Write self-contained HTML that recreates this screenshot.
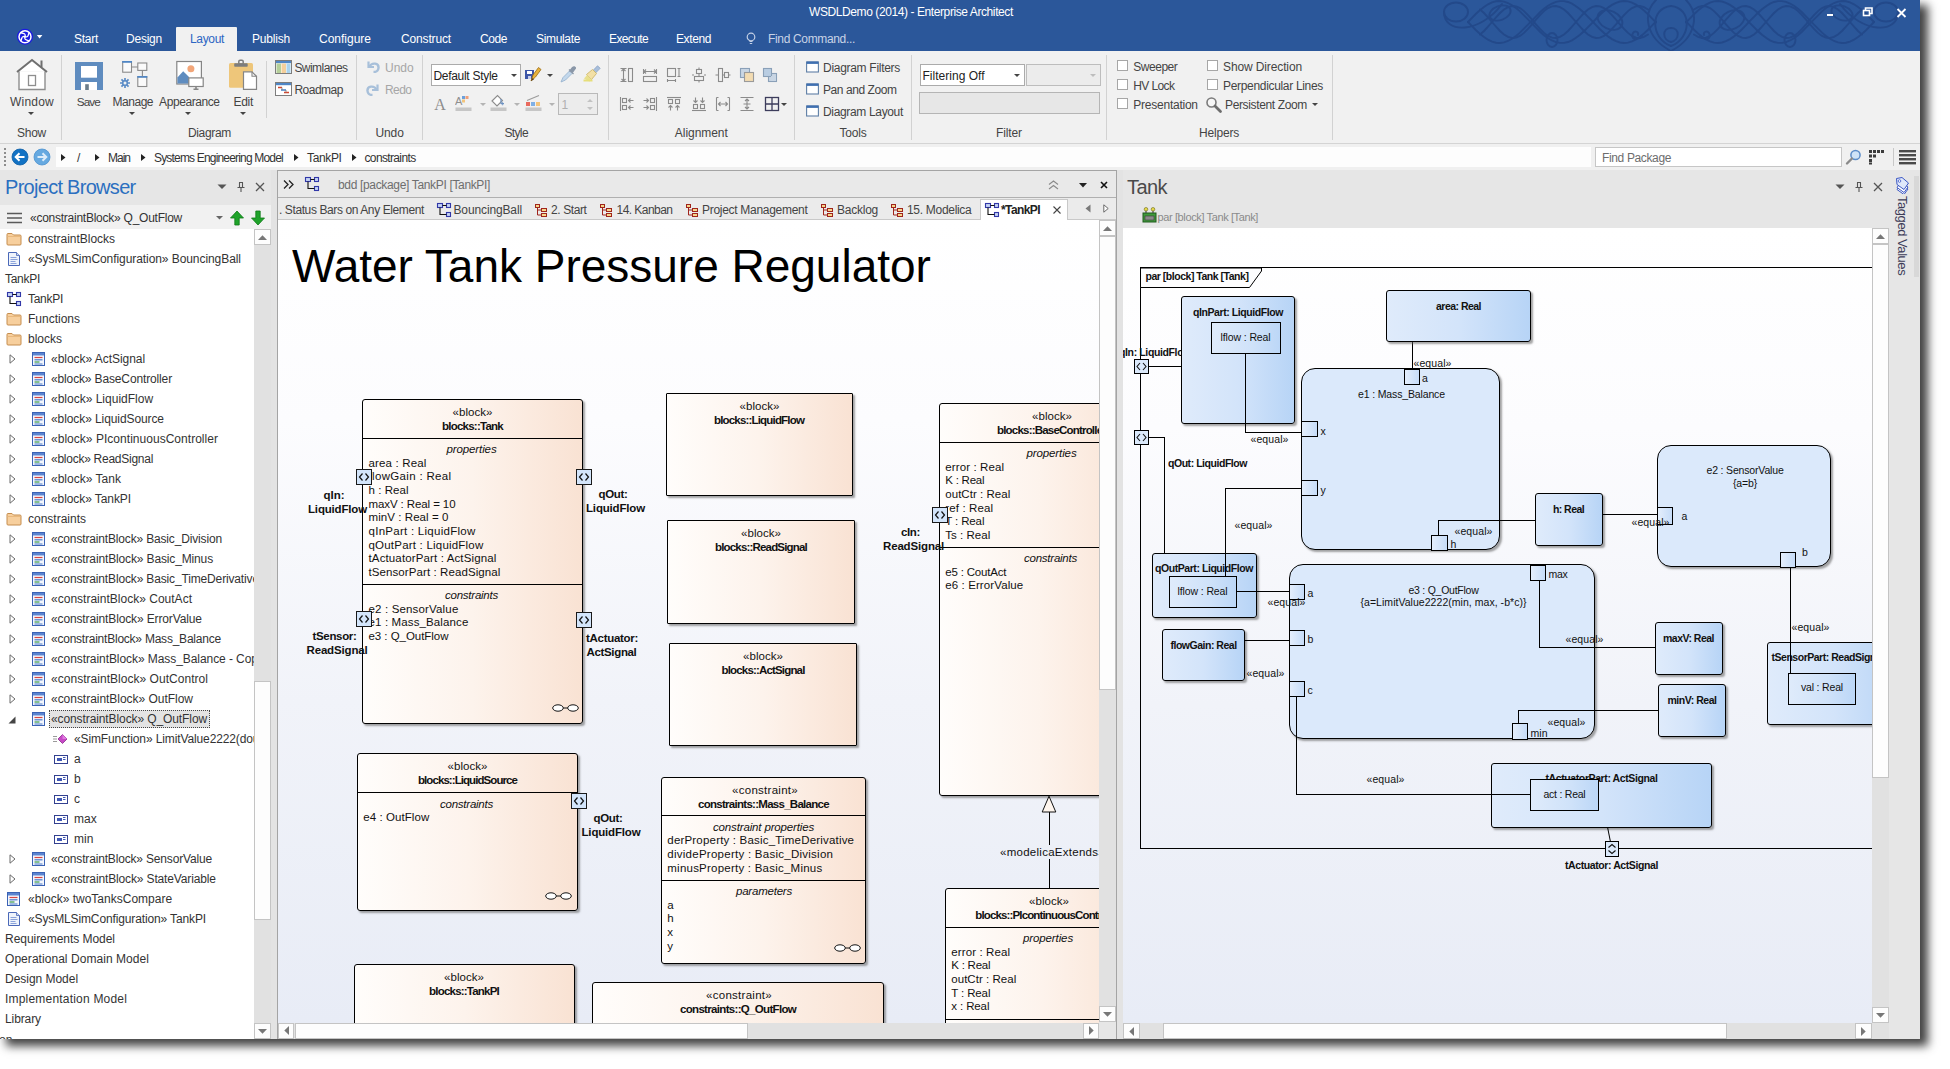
<!DOCTYPE html>
<html lang="en"><head><meta charset="utf-8"><title>WSDLDemo (2014) - Enterprise Architect</title>
<style>
html,body{margin:0;padding:0;background:#fff;}
body{width:1950px;height:1069px;overflow:hidden;position:relative;font-family:"Liberation Sans",sans-serif;font-size:12px;color:#222;}
.b{position:absolute;box-sizing:border-box;display:block;}
.t{position:absolute;white-space:nowrap;display:block;}
#win{position:absolute;left:0;top:0;width:1920px;height:1039px;background:#e6e6e6;overflow:hidden;}
#shadow{position:absolute;left:0;top:0;width:1920px;height:1039px;box-shadow:7px 6px 9px 1px rgba(0,0,0,.74);}
.vp{position:absolute;overflow:hidden;}
.blk{position:absolute;box-sizing:border-box;border:1px solid #000;border-radius:3px;background:linear-gradient(90deg,#fffdfb 0%,#fdf3ec 50%,#f9e2d3 100%);box-shadow:2px 2px 2px rgba(90,90,90,.55);}
.sq{border-radius:1px;}
.bb{position:absolute;box-sizing:border-box;border:1px solid #000;border-radius:3px;background:linear-gradient(90deg,#dfebfb 0%,#d3e4fa 50%,#b7d4f6 100%);box-shadow:2px 2px 2px rgba(90,90,90,.55);}
.bbi{position:absolute;box-sizing:border-box;border:1px solid #000;background:linear-gradient(90deg,#dfebfb 0%,#cfe2f9 60%,#bcd7f7 100%);}
.rb{position:absolute;box-sizing:border-box;border:1px solid #000;border-radius:14px;background:#dbe9fb;box-shadow:2px 2px 2px rgba(90,90,90,.55);}
.pt{position:absolute;box-sizing:border-box;border:1px solid #000;background:linear-gradient(90deg,#e4eefc,#c6dcf8);}
.ln{position:absolute;background:#000;}
.cb{position:absolute;box-sizing:border-box;width:11px;height:11px;border:1px solid #a6a6a6;background:#fff;}
.sep{position:absolute;width:1px;background:#d2d2d2;}
</style></head><body>
<div id="shadow"></div>
<div id="win">

<div class="b " style="left:0px;top:0px;width:1920px;height:51px;background:#2b579a"></div>
<svg class="b" style="left:1420px;top:0px;" width="500" height="51" viewBox="0 0 500 51"><g fill="none" stroke="#23498a" stroke-width="1.900" stroke-linecap="round"><polyline points="48.0 22.0 52.0 26.2 56.0 30.2 60.0 33.9 64.0 37.1 68.0 39.7 72.0 41.6 76.0 42.7 80.0 43.0 84.0 42.4 88.0 41.0 92.0 38.8 96.0 36.0 100.0 32.6 104.0 28.7 108.0 24.6 112.0 20.4 116.0 16.3 120.0 12.3 124.0 8.8 128.0 5.8 132.0 3.5 136.0 1.9 140.0 1.1 144.0 1.1 148.0 2.0 152.0 3.7 156.0 6.2 160.0 9.2 164.0 12.8 168.0 16.8 172.0 20.9 176.0 25.2 180.0 29.2 184.0 33.0 188.0 36.4 192.0 39.1 196.0 41.2 200.0 42.5 204.0 43.0 208.0 42.6 212.0 41.4 216.0 39.4 220.0 36.8 224.0 33.5 228.0 29.7 232.0 25.7 236.0 21.5"/><polyline points="48.0 22.0 52.0 17.8 56.0 13.8 60.0 10.1 64.0 6.9 68.0 4.3 72.0 2.4 76.0 1.3 80.0 1.0 84.0 1.6 88.0 3.0 92.0 5.2 96.0 8.0 100.0 11.4 104.0 15.3 108.0 19.4 112.0 23.6 116.0 27.7 120.0 31.7 124.0 35.2 128.0 38.2 132.0 40.5 136.0 42.1 140.0 42.9 144.0 42.9 148.0 42.0 152.0 40.3 156.0 37.8 160.0 34.8 164.0 31.2 168.0 27.2 172.0 23.1 176.0 18.8 180.0 14.8 184.0 11.0 188.0 7.6 192.0 4.9 196.0 2.8 200.0 1.5 204.0 1.0 208.0 1.4 212.0 2.6 216.0 4.6 220.0 7.2 224.0 10.5 228.0 14.3 232.0 18.3 236.0 22.5"/><polyline points="60.0 34.5 64.0 31.0 68.0 26.7 72.0 22.0 76.0 17.3 80.0 13.0 84.0 9.5 88.0 7.1 92.0 6.0 96.0 6.4 100.0 8.1 104.0 11.1 108.0 15.1 112.0 19.6 116.0 24.4 120.0 28.9 124.0 32.9 128.0 35.9 132.0 37.6 136.0 38.0 140.0 36.9 144.0 34.5 148.0 31.0 152.0 26.7 156.0 22.0 160.0 17.3 164.0 13.0 168.0 9.5 172.0 7.1 176.0 6.0 180.0 6.4 184.0 8.1 188.0 11.1 192.0 15.1 196.0 19.6 200.0 24.4 204.0 28.9 208.0 32.9 212.0 35.9 216.0 37.6 220.0 38.0 224.0 36.9 228.0 34.5"/><polyline points="60.0 9.5 64.0 13.0 68.0 17.3 72.0 22.0 76.0 26.7 80.0 31.0 84.0 34.5 88.0 36.9 92.0 38.0 96.0 37.6 100.0 35.9 104.0 32.9 108.0 28.9 112.0 24.4 116.0 19.6 120.0 15.1 124.0 11.1 128.0 8.1 132.0 6.4 136.0 6.0 140.0 7.1 144.0 9.5 148.0 13.0 152.0 17.3 156.0 22.0 160.0 26.7 164.0 31.0 168.0 34.5 172.0 36.9 176.0 38.0 180.0 37.6 184.0 35.9 188.0 32.9 192.0 28.9 196.0 24.4 200.0 19.6 204.0 15.1 208.0 11.1 212.0 8.1 216.0 6.4 220.0 6.0 224.0 7.1 228.0 9.5"/><ellipse cx="36" cy="12" rx="12" ry="9.500"/><path d="M24 12 C24 34 60 34 82 4"/><ellipse cx="80" cy="13" rx="11" ry="7" transform="rotate(-20 80 13)"/><ellipse cx="132" cy="40" rx="5.500" ry="7"/><ellipse cx="190" cy="20" rx="13" ry="9" transform="rotate(25 190 20)"/><path d="M222 36 c-6 6 -12 2 -9 -3 c2 -3 6 -1 5 2"/><path d="M236 0 C222 14 226 38 251 51"/><path d="M251 6 C230 8 230 38 251 46"/><path d="M251 28 c-9 0 -9 12 0 14"/><g transform="translate(502 0) scale(-1 1)"><polyline points="48.0 22.0 52.0 26.2 56.0 30.2 60.0 33.9 64.0 37.1 68.0 39.7 72.0 41.6 76.0 42.7 80.0 43.0 84.0 42.4 88.0 41.0 92.0 38.8 96.0 36.0 100.0 32.6 104.0 28.7 108.0 24.6 112.0 20.4 116.0 16.3 120.0 12.3 124.0 8.8 128.0 5.8 132.0 3.5 136.0 1.9 140.0 1.1 144.0 1.1 148.0 2.0 152.0 3.7 156.0 6.2 160.0 9.2 164.0 12.8 168.0 16.8 172.0 20.9 176.0 25.2 180.0 29.2 184.0 33.0 188.0 36.4 192.0 39.1 196.0 41.2 200.0 42.5 204.0 43.0 208.0 42.6 212.0 41.4 216.0 39.4 220.0 36.8 224.0 33.5 228.0 29.7 232.0 25.7 236.0 21.5"/><polyline points="48.0 22.0 52.0 17.8 56.0 13.8 60.0 10.1 64.0 6.9 68.0 4.3 72.0 2.4 76.0 1.3 80.0 1.0 84.0 1.6 88.0 3.0 92.0 5.2 96.0 8.0 100.0 11.4 104.0 15.3 108.0 19.4 112.0 23.6 116.0 27.7 120.0 31.7 124.0 35.2 128.0 38.2 132.0 40.5 136.0 42.1 140.0 42.9 144.0 42.9 148.0 42.0 152.0 40.3 156.0 37.8 160.0 34.8 164.0 31.2 168.0 27.2 172.0 23.1 176.0 18.8 180.0 14.8 184.0 11.0 188.0 7.6 192.0 4.9 196.0 2.8 200.0 1.5 204.0 1.0 208.0 1.4 212.0 2.6 216.0 4.6 220.0 7.2 224.0 10.5 228.0 14.3 232.0 18.3 236.0 22.5"/><polyline points="60.0 34.5 64.0 31.0 68.0 26.7 72.0 22.0 76.0 17.3 80.0 13.0 84.0 9.5 88.0 7.1 92.0 6.0 96.0 6.4 100.0 8.1 104.0 11.1 108.0 15.1 112.0 19.6 116.0 24.4 120.0 28.9 124.0 32.9 128.0 35.9 132.0 37.6 136.0 38.0 140.0 36.9 144.0 34.5 148.0 31.0 152.0 26.7 156.0 22.0 160.0 17.3 164.0 13.0 168.0 9.5 172.0 7.1 176.0 6.0 180.0 6.4 184.0 8.1 188.0 11.1 192.0 15.1 196.0 19.6 200.0 24.4 204.0 28.9 208.0 32.9 212.0 35.9 216.0 37.6 220.0 38.0 224.0 36.9 228.0 34.5"/><polyline points="60.0 9.5 64.0 13.0 68.0 17.3 72.0 22.0 76.0 26.7 80.0 31.0 84.0 34.5 88.0 36.9 92.0 38.0 96.0 37.6 100.0 35.9 104.0 32.9 108.0 28.9 112.0 24.4 116.0 19.6 120.0 15.1 124.0 11.1 128.0 8.1 132.0 6.4 136.0 6.0 140.0 7.1 144.0 9.5 148.0 13.0 152.0 17.3 156.0 22.0 160.0 26.7 164.0 31.0 168.0 34.5 172.0 36.9 176.0 38.0 180.0 37.6 184.0 35.9 188.0 32.9 192.0 28.9 196.0 24.4 200.0 19.6 204.0 15.1 208.0 11.1 212.0 8.1 216.0 6.4 220.0 6.0 224.0 7.1 228.0 9.5"/><ellipse cx="36" cy="12" rx="12" ry="9.500"/><path d="M24 12 C24 34 60 34 82 4"/><ellipse cx="80" cy="13" rx="11" ry="7" transform="rotate(-20 80 13)"/><ellipse cx="132" cy="40" rx="5.500" ry="7"/><ellipse cx="190" cy="20" rx="13" ry="9" transform="rotate(25 190 20)"/><path d="M222 36 c-6 6 -12 2 -9 -3 c2 -3 6 -1 5 2"/><path d="M236 0 C222 14 226 38 251 51"/><path d="M251 6 C230 8 230 38 251 46"/><path d="M251 28 c-9 0 -9 12 0 14"/></g></g></svg>
<span class="t " style="left:809px;top:4px;font-size:12px;line-height:16px;letter-spacing:-0.41px;color:#fff">WSDLDemo (2014) - Enterprise Architect</span>
<svg class="b" style="left:1820px;top:4px;" width="90" height="22" viewBox="0 0 90 22"><rect x="7" y="10" width="6" height="2" fill="#fff"/><g fill="none" stroke="#fff" stroke-width="1.6"><rect x="43.5" y="6.500" width="6" height="5"/><path d="M45.500 6 V4 H52 V9.500 H50"/></g><path d="M77.500 5 L85.500 13 M85.500 5 L77.500 13" stroke="#fff" stroke-width="1.8"/></svg>
<svg class="b" style="left:15px;top:27px;" width="34" height="20" viewBox="0 0 34 20"><circle cx="10" cy="9.700" r="8" fill="#1a1ae2"/><circle cx="10" cy="9.700" r="6" fill="none" stroke="#fff" stroke-width="1.500"/><g fill="none" stroke="#fff" stroke-width="1.400"><path d="M5.800 5.500 C9 7 11 6 10 9.700 C9 13.400 11 12.400 14.200 13.900"/><path d="M14.200 5.500 C12.700 8.700 13.700 10.700 10 9.700 C6.300 8.700 7.300 10.700 5.800 13.900"/></g><path d="M21.800 8 h5.600 l-2.800 3.400z" fill="#fff"/></svg>
<div class="b " style="left:176px;top:27px;width:61px;height:25px;background:#f1f1f1;border-radius:1px 1px 0 0"></div>
<span class="t " style="left:74px;top:31px;font-size:12px;line-height:16px;letter-spacing:-0.27px;color:#fff">Start</span>
<span class="t " style="left:126px;top:31px;font-size:12px;line-height:16px;letter-spacing:-0.23px;color:#fff">Design</span>
<span class="t " style="left:190px;top:31px;font-size:12px;line-height:16px;letter-spacing:-0.34px;color:#2c66c3">Layout</span>
<span class="t " style="left:252px;top:31px;font-size:12px;line-height:16px;letter-spacing:-0.19px;color:#fff">Publish</span>
<span class="t " style="left:319px;top:31px;font-size:12px;line-height:16px;letter-spacing:0px;color:#fff">Configure</span>
<span class="t " style="left:401px;top:31px;font-size:12px;line-height:16px;letter-spacing:-0.15px;color:#fff">Construct</span>
<span class="t " style="left:480px;top:31px;font-size:12px;line-height:16px;letter-spacing:-0.42px;color:#fff">Code</span>
<span class="t " style="left:536px;top:31px;font-size:12px;line-height:16px;letter-spacing:-0.34px;color:#fff">Simulate</span>
<span class="t " style="left:609px;top:31px;font-size:12px;line-height:16px;letter-spacing:-0.62px;color:#fff">Execute</span>
<span class="t " style="left:676px;top:31px;font-size:12px;line-height:16px;letter-spacing:-0.39px;color:#fff">Extend</span>
<svg class="b" style="left:744px;top:31px;" width="14" height="16" viewBox="0 0 14 16"><g fill="none" stroke="#c3d0e6" stroke-width="1.2"><circle cx="7" cy="6" r="3.800"/><path d="M5.500 10.500h3M5.800 12.500h2.400"/></g></svg>
<span class="t " style="left:768px;top:31px;font-size:12px;line-height:16px;letter-spacing:-0.34px;color:#c8d3e6">Find Command...</span>
<div class="b " style="left:0px;top:51px;width:1920px;height:93px;background:#f1f1f1"></div>
<div class="b " style="left:0px;top:143px;width:1920px;height:1px;background:#d4d4d4"></div>
<div class="b " style="left:0px;top:144px;width:1920px;height:26px;background:#f0f0f0"></div>
<div class="sep" style="left:61px;top:55px;height:85px"></div>
<div class="sep" style="left:356px;top:55px;height:85px"></div>
<div class="sep" style="left:422px;top:55px;height:85px"></div>
<div class="sep" style="left:608px;top:55px;height:85px"></div>
<div class="sep" style="left:794px;top:55px;height:85px"></div>
<div class="sep" style="left:911px;top:55px;height:85px"></div>
<div class="sep" style="left:1106px;top:55px;height:85px"></div>
<div class="sep" style="left:1332px;top:55px;height:85px"></div>
<div class="sep" style="left:266px;top:61px;height:57px"></div>
<svg class="b" style="left:15px;top:58px;" width="34" height="33" viewBox="0 0 34 33"><g fill="none" stroke-linejoin="miter"><path d="M4 13.500 V31.500 H30 V13.500" stroke="#8e8e8e" stroke-width="1.4" fill="#fff"/><path d="M5 13 L17 2.500 L29 13z" fill="#fff" stroke="none"/><path d="M2 14 L17 2 L32 14" stroke="#6f6f6f" stroke-width="2"/><path d="M26.500 2.500 V9" stroke="#6f6f6f" stroke-width="2"/><rect x="13.500" y="17.500" width="7" height="10" stroke="#8e8e8e" stroke-width="1.3" fill="#fff"/></g></svg>
<span class="t " style="left:10px;top:93.5px;font-size:12px;line-height:16px;letter-spacing:0.22px;color:#444">Window</span>
<svg class="b" style="left:28px;top:111.5px;" width="6" height="3" viewBox="0 0 6 3"><path d="M0 0h6l-3 3z" fill="#444"/></svg>
<span class="t " style="left:17px;top:124.5px;font-size:12px;line-height:16px;letter-spacing:-0.25px;color:#444">Show</span>
<svg class="b" style="left:75px;top:62px;" width="28" height="28" viewBox="0 0 28 28"><rect width="28" height="28" fill="#5f8cbf"/><rect x="6" y="4" width="16" height="11.700" fill="#fff"/><rect x="6" y="20" width="16" height="8" fill="#fff"/><rect x="10.200" y="22.200" width="3.600" height="5.800" fill="#6a7c8a"/></svg>
<span class="t " style="left:76.8px;top:94px;font-size:11.75px;line-height:15px;letter-spacing:-0.95px;color:#444">Save</span>
<svg class="b" style="left:119px;top:60px;" width="30" height="30" viewBox="0 0 30 30"><g fill="#fafafa" stroke="#8a8a8a" stroke-width="1.100"><rect x="3.700" y="1.600" width="8.800" height="10.600"/><rect x="18.800" y="3" width="9" height="7.400"/><rect x="18.800" y="16.700" width="9" height="9.800"/></g><path d="M3.200 1.800h9.800M18.300 16.900h10" stroke="#4f86c6" stroke-width="1.800"/><path d="M12.500 7h6.300M23.400 10.400v6" stroke="#8a8a8a" stroke-width="1.100" fill="none"/><g transform="translate(6 23)"><g stroke="#5b8cc6" stroke-width="1.700"><path d="M0 -5V5M-5 0H5M-3.550 -3.550L3.550 3.550M-3.550 3.550L3.550 -3.550"/></g><circle r="3.100" fill="#5b8cc6"/><circle r="1.500" fill="#f1f1f1"/></g></svg>
<span class="t " style="left:112.55px;top:93.5px;font-size:12px;line-height:16px;letter-spacing:-0.48px;color:#444">Manage</span>
<svg class="b" style="left:129px;top:111.5px;" width="6" height="3" viewBox="0 0 6 3"><path d="M0 0h6l-3 3z" fill="#444"/></svg>
<svg class="b" style="left:174px;top:60px;" width="32" height="32" viewBox="0 0 32 32"><rect x="2.800" y="1.500" width="24.600" height="22.500" fill="#fff" stroke="#858585" stroke-width="1.200"/><circle cx="16.900" cy="8.800" r="3.500" fill="#f2a679"/><path d="M3.400 17.500 L9.200 11.200 L15 17 V23.400 H3.400z" fill="#5f8cbf"/><rect x="14.800" y="17.900" width="14.400" height="8.600" fill="#fff" stroke="#858585" stroke-width="1.200"/><path d="M22 26.500v2.300M19.500 29.300h5" stroke="#858585" stroke-width="1.600" fill="none"/></svg>
<span class="t " style="left:159.05px;top:93.5px;font-size:12px;line-height:16px;letter-spacing:-0.42px;color:#444">Appearance</span>
<svg class="b" style="left:185px;top:111.5px;" width="6" height="3" viewBox="0 0 6 3"><path d="M0 0h6l-3 3z" fill="#444"/></svg>
<svg class="b" style="left:228px;top:59px;" width="30" height="32" viewBox="0 0 30 32"><rect x="1" y="4" width="24" height="24.800" rx="1.600" fill="#eec67a"/><rect x="6.200" y="4.200" width="13.500" height="3.600" rx=".8" fill="#7d7d7d"/><rect x="10.800" y="1.300" width="4.400" height="4" rx="1.300" fill="none" stroke="#7d7d7d" stroke-width="1.500"/><path d="M15.500 12.800 H24 L28.500 17.300 V30.300 H15.500z" fill="#fff" stroke="#858585" stroke-width="1.200"/><path d="M24 12.800V17.300H28.500" fill="none" stroke="#858585" stroke-width="1.100"/></svg>
<span class="t " style="left:233.45px;top:93.5px;font-size:12px;line-height:16px;letter-spacing:-0.29px;color:#444">Edit</span>
<svg class="b" style="left:239.5px;top:111.5px;" width="6" height="3" viewBox="0 0 6 3"><path d="M0 0h6l-3 3z" fill="#444"/></svg>
<svg class="b" style="left:275px;top:60px;" width="17" height="14" viewBox="0 0 17 14"><rect x=".5" y=".5" width="16" height="13" fill="#fff" stroke="#7d7d7d"/><rect x="1" y="1" width="15" height="2.200" fill="#4f86c6"/><rect x="1.500" y="3.500" width="4.500" height="9.500" fill="#b5cf9a"/><rect x="6.500" y="3.500" width="4.500" height="9.500" fill="#f4cf9b"/><rect x="11.500" y="3.500" width="4" height="9.500" fill="#a9d3ee"/></svg>
<span class="t " style="left:294.4px;top:59.5px;font-size:12px;line-height:16px;letter-spacing:-0.54px;color:#444">Swimlanes</span>
<svg class="b" style="left:275px;top:82px;" width="17" height="14" viewBox="0 0 17 14"><rect x=".5" y=".5" width="16" height="13" fill="#fff" stroke="#7d7d7d"/><rect x="1" y="1" width="15" height="2.200" fill="#4f86c6"/><path d="M3 5.500h4M9 10.500h5" stroke="#d0462f" stroke-width="1.600"/><path d="M6 8h5" stroke="#4f86c6" stroke-width="1.600"/><path d="M7 5.500v2.500M11 8v2.500" stroke="#7d7d7d" stroke-width=".8"/></svg>
<span class="t " style="left:294.4px;top:81.5px;font-size:12px;line-height:16px;letter-spacing:-0.49px;color:#444">Roadmap</span>
<span class="t " style="left:188px;top:124.5px;font-size:12px;line-height:16px;letter-spacing:-0.36px;color:#444">Diagram</span>
<svg class="b" style="left:366px;top:60px;" width="15" height="13" viewBox="0 0 15 13"><path d="M2.500 1.500v5.500h5.500" fill="none" stroke="#a8c0da" stroke-width="2.200"/><path d="M3.500 6.500 C6 2 13 3 12.500 8 C12.200 10.800 10 12 7.500 12" fill="none" stroke="#a8c0da" stroke-width="2.400"/></svg>
<span class="t " style="left:385px;top:59.5px;font-size:12px;line-height:16px;letter-spacing:-0.02px;color:#a6a6a6">Undo</span>
<svg class="b" style="left:365px;top:83px;" width="15" height="13" viewBox="0 0 15 13"><path d="M12.500 1.500v5.500h-5.500" fill="none" stroke="#a8c0da" stroke-width="2.200"/><path d="M11.500 6.500 C9 2 2 3 2.500 8 C2.800 10.800 5 12 7.500 12" fill="none" stroke="#a8c0da" stroke-width="2.400"/></svg>
<span class="t " style="left:385px;top:81.5px;font-size:12px;line-height:16px;letter-spacing:-0.55px;color:#a6a6a6">Redo</span>
<span class="t " style="left:375.4px;top:124.5px;font-size:12px;line-height:16px;letter-spacing:-0.07px;color:#444">Undo</span>
<div class="b " style="left:431px;top:64px;width:90px;height:22px;background:#fff;border:1px solid #ababab"></div>
<span class="t " style="left:433.4px;top:67.5px;font-size:12px;line-height:16px;letter-spacing:-0.29px;color:#222">Default Style</span>
<svg class="b" style="left:510.5px;top:73.5px;" width="6" height="3" viewBox="0 0 6 3"><path d="M0 0h6l-3 3z" fill="#444"/></svg>
<svg class="b" style="left:524px;top:66px;" width="18" height="18" viewBox="0 0 18 18"><rect x="1" y="4" width="9" height="9" fill="#3d56a8"/><rect x="3" y="5" width="5" height="3" fill="#fff"/><rect x="4" y="10" width="3" height="3" fill="#c8d0ea"/><path d="M7 15 L9 9 L14.500 1.500 L17 3.500 L11.500 11z" fill="#e8b33c" stroke="#9a6a10" stroke-width=".8"/><path d="M7 15l1 -3 2 1.500z" fill="#5a4020"/></svg>
<svg class="b" style="left:547px;top:73.5px;" width="6" height="3" viewBox="0 0 6 3"><path d="M0 0h6l-3 3z" fill="#444"/></svg>
<svg class="b" style="left:559px;top:66px;" width="17" height="18" viewBox="0 0 17 18"><path d="M2 16 L4 11.500 L10.500 5 L13 7.500 L6.500 14z" fill="#c3d8ec" stroke="#9ab4cf" stroke-width=".9"/><path d="M10 3.500 L14.500 8 M11 5 L13.500 1.500 Q15.500 0 16.500 2 L14 5.500z" fill="#8a97a8" stroke="#8a97a8" stroke-width="1.300"/></svg>
<svg class="b" style="left:583px;top:65px;" width="18" height="18" viewBox="0 0 18 18"><path d="M10 5.500 L14.500 0.800 L17.200 3.300 L12.500 8z" fill="#a9bfdc" stroke="#8aa3c4" stroke-width=".8"/><path d="M3.500 9.500 L9.500 4.500 L13.500 8.500 L8.500 14.500z" fill="#f3e0a6" stroke="#cdb76a" stroke-width=".9"/><path d="M1 13.500 L4 10 L8 14 L6.500 16.500z" fill="#e9e08d"/><path d="M0.500 15.500 h9" stroke="#e6de7a" stroke-width="2"/></svg>
<span class="t " style="left:434.16px;top:93.5px;font-size:16px;line-height:21px;color:#8c8c8c;font-family:&quot;Liberation Serif&quot;,serif">A</span>
<svg class="b" style="left:455px;top:95px;" width="18" height="17" viewBox="0 0 18 17"><text x="0" y="10" font-family="Liberation Sans,sans-serif" font-size="11" fill="#8f8f8f">A</text><rect x="7" y="1" width="3" height="3" fill="#6aa0dc"/><rect x="10.500" y="1" width="3" height="3" fill="#f0a07a"/><rect x="7" y="4.500" width="3" height="3" fill="#f3c47c"/><rect x="0.500" y="12.500" width="16" height="3.500" fill="#c6c6c6"/></svg>
<svg class="b" style="left:479.5px;top:102.5px;" width="6" height="3" viewBox="0 0 6 3"><path d="M0 0h6l-3 3z" fill="#b4b4b4"/></svg>
<svg class="b" style="left:490px;top:94px;" width="18" height="18" viewBox="0 0 18 18"><path d="M2 7 L7.500 1.500 L12.500 6.500 L7 12z" fill="#fff" stroke="#8c8c8c" stroke-width="1.100"/><path d="M12.500 7.500 q2 3 0 4 q-2 -1 0 -4z" fill="#8aa8cf"/><path d="M11 5 v4.500 h3" stroke="#6f93c2" stroke-width="1.200" fill="none"/><rect x="0.500" y="13.500" width="16" height="3.500" fill="#c6c6c6"/></svg>
<svg class="b" style="left:514.3px;top:102.5px;" width="6" height="3" viewBox="0 0 6 3"><path d="M0 0h6l-3 3z" fill="#b4b4b4"/></svg>
<svg class="b" style="left:525px;top:94px;" width="18" height="18" viewBox="0 0 18 18"><path d="M2 6.500 L14 1.500" stroke="#9c9c9c" stroke-width="1.100"/><rect x="1" y="8" width="4" height="4" fill="#e96a5e"/><rect x="6" y="8" width="4" height="4" fill="#7fb0e6"/><rect x="11" y="8" width="4" height="4" fill="#f3c47c"/><rect x="0.500" y="13.500" width="16" height="3.500" fill="#c6c6c6"/></svg>
<svg class="b" style="left:549.3px;top:102.5px;" width="6" height="3" viewBox="0 0 6 3"><path d="M0 0h6l-3 3z" fill="#b4b4b4"/></svg>
<div class="b " style="left:558px;top:93px;width:40px;height:22px;background:#ececec;border:1px solid #b9b9b9"></div>
<span class="t " style="left:561.5px;top:96.5px;font-size:12px;line-height:16px;color:#b0b0b0">1</span>
<svg class="b" style="left:586px;top:98px;" width="8" height="13" viewBox="0 0 8 13"><path d="M1 4L4 1l3 3zM1 9l3 3 3-3z" fill="#c2c2c2"/></svg>
<span class="t " style="left:504.45px;top:124.5px;font-size:12px;line-height:16px;letter-spacing:-0.64px;color:#444">Style</span>
<svg class="b" style="left:619px;top:67px;" width="16" height="16" viewBox="0 0 16 16"><g fill="none" stroke="#8b8b8b" stroke-width="1.100"><path d="M1.500 1.500h6M1.500 14.500h6M4.500 2v12M2.500 4l2-2 2 2M2.500 12l2 2 2-2" stroke-dasharray="0"/><rect x="9.500" y="1.500" width="4" height="13"/></g></svg>
<svg class="b" style="left:641.7px;top:67px;" width="16" height="16" viewBox="0 0 16 16"><g fill="none" stroke="#8b8b8b" stroke-width="1.100"><rect x="1.500" y="9.500" width="13" height="5"/><path d="M1.500 2v5M14.500 2v5M2 4.500h12M4 2.500l-2 2 2 2M12 2.500l2 2-2 2"/></g></svg>
<svg class="b" style="left:666.3px;top:67px;" width="16" height="16" viewBox="0 0 16 16"><g fill="none" stroke="#8b8b8b" stroke-width="1.100"><rect x="1.500" y="1.500" width="8" height="8"/><path d="M13 1.500v8M11.500 1.500h3M11.500 9.500h3M1.500 13.500h8M1.500 12v3M9.500 12v3"/></g></svg>
<svg class="b" style="left:690.7px;top:67px;" width="16" height="16" viewBox="0 0 16 16"><g fill="none" stroke="#8b8b8b" stroke-width="1.100"><rect x="5.500" y="2.500" width="5" height="4"/><rect x="3.500" y="9.500" width="9" height="4"/><path d="M8 0.500v2M8 6.500v3M8 13.500v2M1 8h2M13 8h2"/></g></svg>
<svg class="b" style="left:714.6px;top:67px;" width="16" height="16" viewBox="0 0 16 16"><g fill="none" stroke="#8b8b8b" stroke-width="1.100"><rect x="3.500" y="1.500" width="4" height="13"/><rect x="9.500" y="5.500" width="4" height="5"/><path d="M0.500 8h3M7.500 8h2M13.500 8h2"/></g></svg>
<svg class="b" style="left:738.5px;top:67px;" width="16" height="16" viewBox="0 0 16 16"><g fill="none" stroke="#8b8b8b" stroke-width="1.100"><rect x="1.500" y="1.500" width="9" height="9" fill="#c9d6e4" stroke="#8aa0b8"/><rect x="5.500" y="5.500" width="9" height="9" fill="#f3dcb2" stroke="#9a9a9a"/></g></svg>
<svg class="b" style="left:762.4px;top:67px;" width="16" height="16" viewBox="0 0 16 16"><g fill="none" stroke="#8b8b8b" stroke-width="1.100"><rect x="6.500" y="6.500" width="8" height="8" fill="#c9d6e4" stroke="#8aa0b8"/><rect x="1.500" y="1.500" width="8" height="8" fill="#b9cde2" stroke="#8aa0b8"/><rect x="9" y="9" width="5" height="5" fill="#c9d6e4" stroke="none"/></g></svg>
<svg class="b" style="left:619px;top:96px;" width="16" height="16" viewBox="0 0 16 16"><g fill="none" stroke="#8b8b8b" stroke-width="1.100"><path d="M1.500 1v14"/><rect x="3.500" y="2.500" width="4" height="4"/><rect x="3.500" y="9.500" width="4" height="4"/><path d="M14.500 4.500h-5M11.500 2.500l-2 2 2 2M14.500 11.500h-5M11.500 9.500l-2 2 2 2"/></g></svg>
<svg class="b" style="left:641.7px;top:96px;" width="16" height="16" viewBox="0 0 16 16"><g fill="none" stroke="#8b8b8b" stroke-width="1.100"><path d="M14.500 1v14"/><rect x="8.500" y="2.500" width="4" height="4"/><rect x="8.500" y="9.500" width="4" height="4"/><path d="M1.500 4.500h5M4.500 2.500l2 2-2 2M1.500 11.500h5M4.500 9.500l2 2-2 2"/></g></svg>
<svg class="b" style="left:666.3px;top:96px;" width="16" height="16" viewBox="0 0 16 16"><g fill="none" stroke="#8b8b8b" stroke-width="1.100"><path d="M1 1.500h14"/><rect x="2.500" y="3.500" width="4" height="4"/><rect x="9.500" y="3.500" width="4" height="4"/><path d="M4.500 14.500v-5M2.500 11.500l2-2 2 2M11.500 14.500v-5M9.500 11.500l2-2 2 2"/></g></svg>
<svg class="b" style="left:690.7px;top:96px;" width="16" height="16" viewBox="0 0 16 16"><g fill="none" stroke="#8b8b8b" stroke-width="1.100"><path d="M1 14.500h14"/><rect x="2.500" y="8.500" width="4" height="4"/><rect x="9.500" y="8.500" width="4" height="4"/><path d="M4.500 1.500v5M2.500 4.500l2 2 2-2M11.500 1.500v5M9.500 4.500l2 2 2-2"/></g></svg>
<svg class="b" style="left:714.6px;top:96px;" width="16" height="16" viewBox="0 0 16 16"><g fill="none" stroke="#8b8b8b" stroke-width="1.100"><path d="M1.500 1.500v13M3.500 1.500h-2M3.500 14.500h-2M14.500 1.500v13M12.500 1.500h2M12.500 14.500h2M3.500 8h9M5.500 6l-2 2 2 2M10.500 6l2 2-2 2"/></g></svg>
<svg class="b" style="left:738.5px;top:96px;" width="16" height="16" viewBox="0 0 16 16"><g fill="none" stroke="#8b8b8b" stroke-width="1.100"><path d="M1.500 1.500h13M1.500 14.500h13M8 3v10M6 5l2-2 2 2M6 11l2 2 2-2M4.500 8h7"/></g></svg>
<svg class="b" style="left:764px;top:96px;" width="16" height="16" viewBox="0 0 16 16"><g fill="none" stroke="#3d3d5c" stroke-width="1.300"><rect x="1.500" y="1.500" width="13" height="13"/><path d="M8 1.500v13M1.500 8h13"/></g></svg>
<svg class="b" style="left:780.5px;top:102.5px;" width="6" height="3" viewBox="0 0 6 3"><path d="M0 0h6l-3 3z" fill="#444"/></svg>
<span class="t " style="left:674.8px;top:124.5px;font-size:12px;line-height:16px;letter-spacing:-0.04px;color:#444">Alignment</span>
<svg class="b" style="left:806px;top:61px;" width="13" height="12" viewBox="0 0 13 12"><rect x="0.600" y="1" width="11.800" height="10" fill="#fff" stroke="#5f7fa6" stroke-width="1.100"/><rect x="0.600" y="0.500" width="11.800" height="2.400" fill="#3f6fb0"/></svg>
<span class="t " style="left:823px;top:59.5px;font-size:12px;line-height:16px;letter-spacing:-0.29px;color:#444">Diagram Filters</span>
<svg class="b" style="left:806px;top:83px;" width="13" height="12" viewBox="0 0 13 12"><rect x="0.600" y="1" width="11.800" height="10" fill="#fff" stroke="#5f7fa6" stroke-width="1.100"/><rect x="0.600" y="0.500" width="11.800" height="2.400" fill="#3f6fb0"/></svg>
<span class="t " style="left:823px;top:81.5px;font-size:12px;line-height:16px;letter-spacing:-0.43px;color:#444">Pan and Zoom</span>
<svg class="b" style="left:806px;top:105px;" width="13" height="12" viewBox="0 0 13 12"><rect x="0.600" y="1" width="11.800" height="10" fill="#fff" stroke="#5f7fa6" stroke-width="1.100"/><rect x="0.600" y="0.500" width="11.800" height="2.400" fill="#3f6fb0"/></svg>
<span class="t " style="left:823px;top:103.5px;font-size:12px;line-height:16px;letter-spacing:-0.34px;color:#444">Diagram Layout</span>
<span class="t " style="left:839.5px;top:124.5px;font-size:12px;line-height:16px;letter-spacing:-0.2px;color:#444">Tools</span>
<div class="b " style="left:920px;top:64px;width:105px;height:22px;background:#fff;border:1px solid #ababab"></div>
<span class="t " style="left:922.5px;top:67.5px;font-size:12px;line-height:16px;letter-spacing:0.02px;color:#222">Filtering Off</span>
<svg class="b" style="left:1014px;top:73.5px;" width="6" height="3" viewBox="0 0 6 3"><path d="M0 0h6l-3 3z" fill="#444"/></svg>
<div class="b " style="left:1026px;top:64px;width:75px;height:22px;background:#ececec;border:1px solid #bdbdbd"></div>
<svg class="b" style="left:1090px;top:73.5px;" width="6" height="3" viewBox="0 0 6 3"><path d="M0 0h6l-3 3z" fill="#bdbdbd"/></svg>
<div class="b " style="left:919px;top:92px;width:181px;height:22px;background:#e7e7e7;border:1px solid #b5b5b5"></div>
<span class="t " style="left:996px;top:124.5px;font-size:12px;line-height:16px;letter-spacing:-0.11px;color:#444">Filter</span>
<div class="cb" style="left:1117px;top:60px"></div>
<span class="t " style="left:1133.3px;top:58.5px;font-size:12px;line-height:16px;letter-spacing:-0.48px;color:#444">Sweeper</span>
<div class="cb" style="left:1117px;top:79px"></div>
<span class="t " style="left:1133.3px;top:77.5px;font-size:12px;line-height:16px;letter-spacing:-0.62px;color:#444">HV Lock</span>
<div class="cb" style="left:1117px;top:98.3px"></div>
<span class="t " style="left:1133.3px;top:96.8px;font-size:12px;line-height:16px;letter-spacing:-0.24px;color:#444">Presentation</span>
<div class="cb" style="left:1207px;top:60px"></div>
<span class="t " style="left:1223px;top:58.5px;font-size:12px;line-height:16px;letter-spacing:-0.12px;color:#444">Show Direction</span>
<div class="cb" style="left:1207px;top:79px"></div>
<span class="t " style="left:1223px;top:77.5px;font-size:12px;line-height:16px;letter-spacing:-0.32px;color:#444">Perpendicular Lines</span>
<svg class="b" style="left:1205px;top:96px;" width="18" height="18" viewBox="0 0 18 18"><circle cx="6.500" cy="6.500" r="4.500" fill="#f6f6f6" stroke="#7a7a7a" stroke-width="1.600"/><path d="M10 10 L15.500 15.500" stroke="#6d6d6d" stroke-width="2.800" stroke-linecap="round"/></svg>
<span class="t " style="left:1225px;top:97.2px;font-size:12px;line-height:16px;letter-spacing:-0.36px;color:#444">Persistent Zoom</span>
<svg class="b" style="left:1311.5px;top:102.5px;" width="6" height="3" viewBox="0 0 6 3"><path d="M0 0h6l-3 3z" fill="#444"/></svg>
<span class="t " style="left:1199px;top:124.5px;font-size:12px;line-height:16px;letter-spacing:-0.19px;color:#444">Helpers</span>
<svg class="b" style="left:3px;top:147px;" width="5" height="20" viewBox="0 0 5 20"><g fill="#8d8d8d"><rect x="1" y="1" width="2" height="2"/><rect x="1" y="5" width="2" height="2"/><rect x="1" y="9" width="2" height="2"/><rect x="1" y="13" width="2" height="2"/><rect x="1" y="17" width="2" height="2"/></g></svg>
<svg class="b" style="left:11px;top:148px;" width="18" height="18" viewBox="0 0 18 18"><circle cx="9" cy="9" r="8" fill="#1272c4"/><circle cx="9" cy="9" r="8" fill="none" stroke="#0d5ea6" stroke-width=".8"/><path d="M13.500 9H5M8.500 5.200L4.700 9l3.800 3.800" fill="none" stroke="#fff" stroke-width="2"/></svg>
<svg class="b" style="left:33px;top:148px;" width="18" height="18" viewBox="0 0 18 18"><circle cx="9" cy="9" r="8" fill="#66a9e0"/><circle cx="9" cy="9" r="8" fill="none" stroke="#4d92cf" stroke-width=".8"/><path d="M4.500 9H13M9.500 5.200L13.300 9l-3.800 3.800" fill="none" stroke="#dcecf9" stroke-width="2"/></svg>
<div class="b " style="left:56px;top:147px;width:1535px;height:20px;background:#fdfdfd"></div>
<svg class="b" style="left:61px;top:153.5px;" width="5" height="7" viewBox="0 0 5 7"><path d="M0 0l4.500 3.500L0 7z" fill="#222"/></svg>
<span class="t " style="left:77px;top:149.5px;font-size:12px;line-height:16px;color:#333">/</span>
<svg class="b" style="left:95px;top:153.5px;" width="5" height="7" viewBox="0 0 5 7"><path d="M0 0l4.500 3.500L0 7z" fill="#222"/></svg>
<span class="t " style="left:108px;top:149.5px;font-size:12px;line-height:16px;letter-spacing:-1px;color:#333">Main</span>
<svg class="b" style="left:141px;top:153.5px;" width="5" height="7" viewBox="0 0 5 7"><path d="M0 0l4.500 3.500L0 7z" fill="#222"/></svg>
<span class="t " style="left:154px;top:149.5px;font-size:12px;line-height:16px;letter-spacing:-0.82px;color:#333">Systems Engineering Model</span>
<svg class="b" style="left:294px;top:153.5px;" width="5" height="7" viewBox="0 0 5 7"><path d="M0 0l4.500 3.500L0 7z" fill="#222"/></svg>
<span class="t " style="left:307px;top:149.5px;font-size:12px;line-height:16px;letter-spacing:-0.36px;color:#333">TankPI</span>
<svg class="b" style="left:352px;top:153.5px;" width="5" height="7" viewBox="0 0 5 7"><path d="M0 0l4.500 3.500L0 7z" fill="#222"/></svg>
<span class="t " style="left:364.5px;top:149.5px;font-size:12px;line-height:16px;letter-spacing:-0.64px;color:#333">constraints</span>
<div class="b " style="left:1595px;top:147px;width:247px;height:20px;background:#fff;border:1px solid #c6c6c6"></div>
<span class="t " style="left:1602px;top:149.5px;font-size:12px;line-height:16px;letter-spacing:-0.36px;color:#6d6d6d">Find Package</span>
<svg class="b" style="left:1845px;top:148px;" width="18" height="18" viewBox="0 0 18 18"><circle cx="10.500" cy="7" r="4.600" fill="#cfe3f7" stroke="#5b8cc8" stroke-width="1.500"/><path d="M7 10.500L2 15.500" stroke="#8a8a8a" stroke-width="2.400" stroke-linecap="round"/></svg>
<svg class="b" style="left:1868px;top:149px;" width="18" height="16" viewBox="0 0 18 16"><g fill="#3c3c3c"><rect x="1" y="1" width="3" height="3"/><rect x="5" y="1" width="3" height="3"/><rect x="9" y="1" width="3" height="3"/><rect x="13" y="1" width="3" height="3"/><rect x="1" y="5.500" width="3" height="3"/><rect x="5" y="5.500" width="3" height="3"/><rect x="1" y="10" width="3" height="3"/><rect x="1" y="13.500" width="3" height="2"/></g></svg>
<div class="b " style="left:1893px;top:148px;width:1px;height:18px;background:#c8c8c8"></div>
<svg class="b" style="left:1899px;top:150px;" width="17" height="15" viewBox="0 0 17 15"><g fill="#4a4a4a"><rect x="0" y="0" width="17" height="2.400"/><rect x="0" y="4" width="17" height="2.400"/><rect x="0" y="8" width="17" height="2.400"/><rect x="0" y="12" width="17" height="2.400"/></g></svg>
<svg width="0" height="0" style="position:absolute"><defs>
<symbol id="i-folder" viewBox="0 0 16 14"><path d="M1 2.500 Q1 1.500 2 1.500 H6 L7.500 3 H14 Q15 3 15 4 V12 Q15 13 14 13 H2 Q1 13 1 12z" fill="#f7cf9d" stroke="#c58d4e" stroke-width="1"/><path d="M1.500 4.500H14.500" stroke="#e9b97e" stroke-width="1"/></symbol>
<symbol id="i-doc" viewBox="0 0 14 14"><path d="M1.500 0.500 H9.500 L12.500 3.500 V13.500 H1.500z" fill="#eef3fb" stroke="#4a68b8" stroke-width="1"/><path d="M9.500 .5V3.500H12.500" fill="#c9d6f0" stroke="#4a68b8" stroke-width=".8"/><path d="M3.500 5.500h6M3.500 7.500h7M3.500 9.500h5M3.500 11.500h6" stroke="#7e98d6" stroke-width=".9"/></symbol>
<symbol id="i-dgm" viewBox="0 0 16 16"><g fill="#c4d2f4" stroke="#3238a8" stroke-width="1.100"><rect x="1.500" y="1.500" width="5" height="4"/><rect x="10.500" y="1.500" width="4" height="4"/><rect x="10.500" y="10.500" width="4" height="4"/></g><path d="M6.500 3.500h4M4 5.500v7h6.500" fill="none" stroke="#111" stroke-width="1.100"/></symbol>
<symbol id="i-blk" viewBox="0 0 13 14"><rect x="0.500" y="0.500" width="12" height="13" fill="#f4f7fd" stroke="#3b62b5" stroke-width="1"/><rect x="1" y="1" width="11" height="2.500" fill="#5b84d0"/><path d="M2.500 5.500h8" stroke="#d64545" stroke-width="1.200"/><path d="M2.500 7.800h8" stroke="#4a78c8" stroke-width="1.200"/><path d="M2.500 10h5" stroke="#3a9a4a" stroke-width="1.200"/><path d="M2.500 12h8" stroke="#4a78c8" stroke-width="1"/></symbol>
<symbol id="i-port" viewBox="0 0 14 9"><rect x="0.500" y="0.500" width="13" height="8" fill="#fff" stroke="#33408f" stroke-width="1"/><rect x="3" y="3" width="5" height="3" fill="#3f57b5"/><path d="M9 2.500h2.500M9 4.500h2.500" stroke="#3f57b5" stroke-width="1"/></symbol>
<symbol id="i-fn" viewBox="0 0 15 10"><path d="M0 2.500h4M0 5h4M0 7.500h4" stroke="#9a9a9a" stroke-width="1"/><path d="M9.500 0.500 L14 5 L9.500 9.500 L5 5z" fill="#c648c6" stroke="#8a2a8a" stroke-width=".8"/><path d="M9.500 .5L14 5 9.500 5z" fill="#e07ae0"/></symbol>
</defs></svg>
<span class="t " style="left:5px;top:174px;font-size:20px;line-height:26px;letter-spacing:-0.71px;color:#2b6fc0">Project Browser</span>
<svg class="b" style="left:217px;top:184px;" width="10" height="6" viewBox="0 0 10 6"><path d="M0.500 0.500h9l-4.500 4.500z" fill="#555"/></svg>
<svg class="b" style="left:236px;top:181px;" width="10" height="12" viewBox="0 0 10 12"><path d="M3 1.500h4M3.500 1.500v5M6.500 1.500v5M1.500 6.500h7M5 6.500v4.500" fill="none" stroke="#555" stroke-width="1.100"/></svg>
<svg class="b" style="left:255px;top:182px;" width="10" height="10" viewBox="0 0 10 10"><path d="M1 1l8 8M9 1l-8 8" stroke="#555" stroke-width="1.300"/></svg>
<div class="b " style="left:0px;top:205px;width:271px;height:24px;background:#f1f1f1"></div>
<svg class="b" style="left:7px;top:212px;" width="15" height="12" viewBox="0 0 15 12"><path d="M0 1.500h15M0 6h15M0 10.500h15" stroke="#5a5a5a" stroke-width="1.600"/></svg>
<span class="t " style="left:30px;top:209.5px;font-size:12px;line-height:16px;letter-spacing:-0.25px;color:#333">«constraintBlock» Q_OutFlow</span>
<svg class="b" style="left:216px;top:215.5px;" width="7" height="4" viewBox="0 0 7 4"><path d="M0 0h7l-3.500 3.500z" fill="#666"/></svg>
<svg class="b" style="left:229px;top:210px;" width="16" height="16" viewBox="0 0 16 16"><path d="M8 1 L14.500 8 H10.200 V15 H5.800 V8 H1.500z" fill="#1fa32a" stroke="#0f7a18" stroke-width=".8"/></svg>
<svg class="b" style="left:250px;top:210px;" width="16" height="16" viewBox="0 0 16 16"><path d="M8 15 L14.500 8 H10.200 V1 H5.800 V8 H1.500z" fill="#1fa32a" stroke="#0f7a18" stroke-width=".8"/></svg>
<div class="vp" style="left:0;top:229px;width:254px;height:810px;background:#fff">
<svg class="b" style="left:6px;top:3px" width="16" height="14"><use href="#i-folder"/></svg>
<span class="t " style="left:28px;top:2px;font-size:12px;line-height:16px;letter-spacing:-0.02px;color:#333">constraintBlocks</span>
<svg class="b" style="left:7px;top:23px" width="14" height="14"><use href="#i-doc"/></svg>
<span class="t " style="left:28px;top:22px;font-size:12px;line-height:16px;letter-spacing:-0.07px;color:#333">«SysMLSimConfiguration» BouncingBall</span>
<span class="t " style="left:5px;top:42px;font-size:12px;line-height:16px;letter-spacing:-0.28px;color:#333">TankPI</span>
<svg class="b" style="left:6px;top:62px" width="16" height="16"><use href="#i-dgm"/></svg>
<span class="t " style="left:28px;top:62px;font-size:12px;line-height:16px;letter-spacing:-0.28px;color:#333">TankPI</span>
<svg class="b" style="left:6px;top:83px" width="16" height="14"><use href="#i-folder"/></svg>
<span class="t " style="left:28px;top:82px;font-size:12px;line-height:16px;letter-spacing:0px;color:#333">Functions</span>
<svg class="b" style="left:6px;top:103px" width="16" height="14"><use href="#i-folder"/></svg>
<span class="t " style="left:28px;top:102px;font-size:12px;line-height:16px;letter-spacing:0px;color:#333">blocks</span>
<svg class="b" style="left:9px;top:125px;" width="7" height="10" viewBox="0 0 7 10"><path d="M1 0.800 L6 5 L1 9.200z" fill="#fff" stroke="#6a6a6a" stroke-width="1"/></svg>
<svg class="b" style="left:32px;top:123px" width="13" height="14"><use href="#i-blk"/></svg>
<span class="t " style="left:51px;top:122px;font-size:12px;line-height:16px;letter-spacing:-0.04px;color:#333">«block» ActSignal</span>
<svg class="b" style="left:9px;top:145px;" width="7" height="10" viewBox="0 0 7 10"><path d="M1 0.800 L6 5 L1 9.200z" fill="#fff" stroke="#6a6a6a" stroke-width="1"/></svg>
<svg class="b" style="left:32px;top:143px" width="13" height="14"><use href="#i-blk"/></svg>
<span class="t " style="left:51px;top:142px;font-size:12px;line-height:16px;letter-spacing:-0.14px;color:#333">«block» BaseController</span>
<svg class="b" style="left:9px;top:165px;" width="7" height="10" viewBox="0 0 7 10"><path d="M1 0.800 L6 5 L1 9.200z" fill="#fff" stroke="#6a6a6a" stroke-width="1"/></svg>
<svg class="b" style="left:32px;top:163px" width="13" height="14"><use href="#i-blk"/></svg>
<span class="t " style="left:51px;top:162px;font-size:12px;line-height:16px;letter-spacing:0px;color:#333">«block» LiquidFlow</span>
<svg class="b" style="left:9px;top:185px;" width="7" height="10" viewBox="0 0 7 10"><path d="M1 0.800 L6 5 L1 9.200z" fill="#fff" stroke="#6a6a6a" stroke-width="1"/></svg>
<svg class="b" style="left:32px;top:183px" width="13" height="14"><use href="#i-blk"/></svg>
<span class="t " style="left:51px;top:182px;font-size:12px;line-height:16px;letter-spacing:-0.09px;color:#333">«block» LiquidSource</span>
<svg class="b" style="left:9px;top:205px;" width="7" height="10" viewBox="0 0 7 10"><path d="M1 0.800 L6 5 L1 9.200z" fill="#fff" stroke="#6a6a6a" stroke-width="1"/></svg>
<svg class="b" style="left:32px;top:203px" width="13" height="14"><use href="#i-blk"/></svg>
<span class="t " style="left:51px;top:202px;font-size:12px;line-height:16px;letter-spacing:0.03px;color:#333">«block» PIcontinuousController</span>
<svg class="b" style="left:9px;top:225px;" width="7" height="10" viewBox="0 0 7 10"><path d="M1 0.800 L6 5 L1 9.200z" fill="#fff" stroke="#6a6a6a" stroke-width="1"/></svg>
<svg class="b" style="left:32px;top:223px" width="13" height="14"><use href="#i-blk"/></svg>
<span class="t " style="left:51px;top:222px;font-size:12px;line-height:16px;letter-spacing:-0.26px;color:#333">«block» ReadSignal</span>
<svg class="b" style="left:9px;top:245px;" width="7" height="10" viewBox="0 0 7 10"><path d="M1 0.800 L6 5 L1 9.200z" fill="#fff" stroke="#6a6a6a" stroke-width="1"/></svg>
<svg class="b" style="left:32px;top:243px" width="13" height="14"><use href="#i-blk"/></svg>
<span class="t " style="left:51px;top:242px;font-size:12px;line-height:16px;letter-spacing:0.01px;color:#333">«block» Tank</span>
<svg class="b" style="left:9px;top:265px;" width="7" height="10" viewBox="0 0 7 10"><path d="M1 0.800 L6 5 L1 9.200z" fill="#fff" stroke="#6a6a6a" stroke-width="1"/></svg>
<svg class="b" style="left:32px;top:263px" width="13" height="14"><use href="#i-blk"/></svg>
<span class="t " style="left:51px;top:262px;font-size:12px;line-height:16px;letter-spacing:-0.08px;color:#333">«block» TankPI</span>
<svg class="b" style="left:6px;top:283px" width="16" height="14"><use href="#i-folder"/></svg>
<span class="t " style="left:28px;top:282px;font-size:12px;line-height:16px;letter-spacing:0px;color:#333">constraints</span>
<svg class="b" style="left:9px;top:305px;" width="7" height="10" viewBox="0 0 7 10"><path d="M1 0.800 L6 5 L1 9.200z" fill="#fff" stroke="#6a6a6a" stroke-width="1"/></svg>
<svg class="b" style="left:32px;top:303px" width="13" height="14"><use href="#i-blk"/></svg>
<span class="t " style="left:51px;top:302px;font-size:12px;line-height:16px;letter-spacing:-0.16px;color:#333">«constraintBlock» Basic_Division</span>
<svg class="b" style="left:9px;top:325px;" width="7" height="10" viewBox="0 0 7 10"><path d="M1 0.800 L6 5 L1 9.200z" fill="#fff" stroke="#6a6a6a" stroke-width="1"/></svg>
<svg class="b" style="left:32px;top:323px" width="13" height="14"><use href="#i-blk"/></svg>
<span class="t " style="left:51px;top:322px;font-size:12px;line-height:16px;letter-spacing:-0.14px;color:#333">«constraintBlock» Basic_Minus</span>
<svg class="b" style="left:9px;top:345px;" width="7" height="10" viewBox="0 0 7 10"><path d="M1 0.800 L6 5 L1 9.200z" fill="#fff" stroke="#6a6a6a" stroke-width="1"/></svg>
<svg class="b" style="left:32px;top:343px" width="13" height="14"><use href="#i-blk"/></svg>
<span class="t " style="left:51px;top:342px;font-size:12px;line-height:16px;letter-spacing:-0.15px;color:#333">«constraintBlock» Basic_TimeDerivative</span>
<svg class="b" style="left:9px;top:365px;" width="7" height="10" viewBox="0 0 7 10"><path d="M1 0.800 L6 5 L1 9.200z" fill="#fff" stroke="#6a6a6a" stroke-width="1"/></svg>
<svg class="b" style="left:32px;top:363px" width="13" height="14"><use href="#i-blk"/></svg>
<span class="t " style="left:51px;top:362px;font-size:12px;line-height:16px;letter-spacing:0.01px;color:#333">«constraintBlock» CoutAct</span>
<svg class="b" style="left:9px;top:385px;" width="7" height="10" viewBox="0 0 7 10"><path d="M1 0.800 L6 5 L1 9.200z" fill="#fff" stroke="#6a6a6a" stroke-width="1"/></svg>
<svg class="b" style="left:32px;top:383px" width="13" height="14"><use href="#i-blk"/></svg>
<span class="t " style="left:51px;top:382px;font-size:12px;line-height:16px;letter-spacing:-0.13px;color:#333">«constraintBlock» ErrorValue</span>
<svg class="b" style="left:9px;top:405px;" width="7" height="10" viewBox="0 0 7 10"><path d="M1 0.800 L6 5 L1 9.200z" fill="#fff" stroke="#6a6a6a" stroke-width="1"/></svg>
<svg class="b" style="left:32px;top:403px" width="13" height="14"><use href="#i-blk"/></svg>
<span class="t " style="left:51px;top:402px;font-size:12px;line-height:16px;letter-spacing:-0.23px;color:#333">«constraintBlock» Mass_Balance</span>
<svg class="b" style="left:9px;top:425px;" width="7" height="10" viewBox="0 0 7 10"><path d="M1 0.800 L6 5 L1 9.200z" fill="#fff" stroke="#6a6a6a" stroke-width="1"/></svg>
<svg class="b" style="left:32px;top:423px" width="13" height="14"><use href="#i-blk"/></svg>
<span class="t " style="left:51px;top:422px;font-size:12px;line-height:16px;letter-spacing:-0.07px;color:#333">«constraintBlock» Mass_Balance - Copy</span>
<svg class="b" style="left:9px;top:445px;" width="7" height="10" viewBox="0 0 7 10"><path d="M1 0.800 L6 5 L1 9.200z" fill="#fff" stroke="#6a6a6a" stroke-width="1"/></svg>
<svg class="b" style="left:32px;top:443px" width="13" height="14"><use href="#i-blk"/></svg>
<span class="t " style="left:51px;top:442px;font-size:12px;line-height:16px;letter-spacing:0.03px;color:#333">«constraintBlock» OutControl</span>
<svg class="b" style="left:9px;top:465px;" width="7" height="10" viewBox="0 0 7 10"><path d="M1 0.800 L6 5 L1 9.200z" fill="#fff" stroke="#6a6a6a" stroke-width="1"/></svg>
<svg class="b" style="left:32px;top:463px" width="13" height="14"><use href="#i-blk"/></svg>
<span class="t " style="left:51px;top:462px;font-size:12px;line-height:16px;letter-spacing:-0.03px;color:#333">«constraintBlock» OutFlow</span>
<svg class="b" style="left:8px;top:487px;" width="8" height="8" viewBox="0 0 8 8"><path d="M7.500 0.500 V7.500 H0.500z" fill="#444"/></svg>
<div class="b " style="left:49px;top:481px;width:161px;height:18px;background:#e3e3e3;border:1px dotted #444"></div>
<svg class="b" style="left:32px;top:483px" width="13" height="14"><use href="#i-blk"/></svg>
<span class="t " style="left:51px;top:482px;font-size:12px;line-height:16px;letter-spacing:-0.1px;color:#333">«constraintBlock» Q_OutFlow</span>
<svg class="b" style="left:53px;top:505px" width="15" height="10"><use href="#i-fn"/></svg>
<span class="t " style="left:74px;top:502px;font-size:12px;line-height:16px;letter-spacing:-0.12px;color:#333">«SimFunction» LimitValue2222(double)</span>
<svg class="b" style="left:54px;top:525.5px" width="14" height="9"><use href="#i-port"/></svg>
<span class="t " style="left:74px;top:522px;font-size:12px;line-height:16px;color:#333">a</span>
<svg class="b" style="left:54px;top:545.5px" width="14" height="9"><use href="#i-port"/></svg>
<span class="t " style="left:74px;top:542px;font-size:12px;line-height:16px;color:#333">b</span>
<svg class="b" style="left:54px;top:565.5px" width="14" height="9"><use href="#i-port"/></svg>
<span class="t " style="left:74px;top:562px;font-size:12px;line-height:16px;color:#333">c</span>
<svg class="b" style="left:54px;top:585.5px" width="14" height="9"><use href="#i-port"/></svg>
<span class="t " style="left:74px;top:582px;font-size:12px;line-height:16px;color:#333">max</span>
<svg class="b" style="left:54px;top:605.5px" width="14" height="9"><use href="#i-port"/></svg>
<span class="t " style="left:74px;top:602px;font-size:12px;line-height:16px;color:#333">min</span>
<svg class="b" style="left:9px;top:625px;" width="7" height="10" viewBox="0 0 7 10"><path d="M1 0.800 L6 5 L1 9.200z" fill="#fff" stroke="#6a6a6a" stroke-width="1"/></svg>
<svg class="b" style="left:32px;top:623px" width="13" height="14"><use href="#i-blk"/></svg>
<span class="t " style="left:51px;top:622px;font-size:12px;line-height:16px;letter-spacing:-0.17px;color:#333">«constraintBlock» SensorValue</span>
<svg class="b" style="left:9px;top:645px;" width="7" height="10" viewBox="0 0 7 10"><path d="M1 0.800 L6 5 L1 9.200z" fill="#fff" stroke="#6a6a6a" stroke-width="1"/></svg>
<svg class="b" style="left:32px;top:643px" width="13" height="14"><use href="#i-blk"/></svg>
<span class="t " style="left:51px;top:642px;font-size:12px;line-height:16px;letter-spacing:-0.14px;color:#333">«constraintBlock» StateVariable</span>
<svg class="b" style="left:7px;top:663px" width="13" height="14"><use href="#i-blk"/></svg>
<span class="t " style="left:28px;top:662px;font-size:12px;line-height:16px;letter-spacing:0px;color:#333">«block» twoTanksCompare</span>
<svg class="b" style="left:7px;top:683px" width="14" height="14"><use href="#i-doc"/></svg>
<span class="t " style="left:28px;top:682px;font-size:12px;line-height:16px;letter-spacing:-0.13px;color:#333">«SysMLSimConfiguration» TankPI</span>
<span class="t " style="left:5px;top:702px;font-size:12px;line-height:16px;letter-spacing:-0.04px;color:#333">Requirements Model</span>
<span class="t " style="left:5px;top:722px;font-size:12px;line-height:16px;letter-spacing:0.05px;color:#333">Operational Domain Model</span>
<span class="t " style="left:5px;top:742px;font-size:12px;line-height:16px;letter-spacing:-0.03px;color:#333">Design Model</span>
<span class="t " style="left:5px;top:762px;font-size:12px;line-height:16px;letter-spacing:0.2px;color:#333">Implementation Model</span>
<span class="t " style="left:5px;top:782px;font-size:12px;line-height:16px;letter-spacing:-0.1px;color:#333">Library</span>
<span class="t " style="left:-1px;top:803px;font-size:12px;line-height:16px;color:#333">on</span>
</div>
<div class="b " style="left:254px;top:229px;width:17px;height:810px;background:#e1e1e1"></div>
<div class="b " style="left:254px;top:229px;width:17px;height:16px;background:#fdfdfd;border:1px solid #c4c4c4"></div>
<svg class="b" style="left:258px;top:234.5px;" width="9" height="5" viewBox="0 0 9 5"><path d="M0 5L4.500 0.300L9 5z" fill="#777"/></svg>
<div class="b " style="left:254px;top:1023px;width:17px;height:16px;background:#fdfdfd;border:1px solid #c4c4c4"></div>
<svg class="b" style="left:258px;top:1028.5px;" width="9" height="5" viewBox="0 0 9 5"><path d="M0 0L4.500 4.700L9 0z" fill="#777"/></svg>
<div class="b " style="left:254px;top:681px;width:17px;height:239px;background:#fdfdfd;border:1px solid #c4c4c4"></div>
<div class="b " style="left:271px;top:170px;width:6px;height:869px;background:#e3e3e3"></div>
<div class="b " style="left:277px;top:170px;width:840px;height:869px;background:#e9e9e9;border:1px solid #a4a4a4"></div>
<div class="b " style="left:1117px;top:170px;width:6px;height:869px;background:#e3e3e3"></div>
<svg class="b" style="left:283px;top:179px;" width="11" height="11" viewBox="0 0 11 11"><path d="M1 1.500l4 4-4 4M6 1.500l4 4-4 4" fill="none" stroke="#222" stroke-width="1.300"/></svg>
<svg class="b" style="left:304px;top:176px" width="16" height="16"><use href="#i-dgm"/></svg>
<span class="t " style="left:338px;top:177px;font-size:12px;line-height:16px;letter-spacing:-0.34px;color:#6e6e6e">bdd [package] TankPI [TankPI]</span>
<svg class="b" style="left:1048px;top:180px;" width="11" height="10" viewBox="0 0 11 10"><path d="M1 4.500l4.500-3.500 4.500 3.500M1 9l4.500-3.500 4.500 3.500" fill="none" stroke="#8a8a8a" stroke-width="1.100"/></svg>
<svg class="b" style="left:1079px;top:183px;" width="8" height="5" viewBox="0 0 8 5"><path d="M0 0h8l-4 4.500z" fill="#222"/></svg>
<svg class="b" style="left:1100px;top:181px;" width="8" height="8" viewBox="0 0 8 8"><path d="M1 1l6 6M7 1l-6 6" stroke="#111" stroke-width="1.600"/></svg>
<div class="b " style="left:278px;top:197px;width:838px;height:1px;background:#b0b0b0"></div>
<div class="b " style="left:278px;top:198px;width:838px;height:22px;background:#ebebeb"></div>
<div class="b " style="left:278px;top:219px;width:838px;height:1px;background:#c9c9c9"></div>
<svg width="0" height="0" style="position:absolute"><defs>
<symbol id="i-kan" viewBox="0 0 14 14"><g fill="#f6d78a" stroke="#a0241c" stroke-width="1"><rect x="1.500" y="1.500" width="4" height="3"/><rect x="7.500" y="5.500" width="5" height="3"/><rect x="7.500" y="10.500" width="5" height="3"/></g><path d="M3.500 4.500v7.500h4M3.500 7h4" fill="none" stroke="#a0241c" stroke-width="1"/></symbol>
</defs></svg>
<span class="t " style="left:279px;top:201.5px;font-size:12px;line-height:16px;letter-spacing:-0.4px;color:#444">. Status Bars on Any Element</span>
<svg class="b" style="left:436px;top:202px" width="16" height="16"><use href="#i-dgm"/></svg>
<span class="t " style="left:453.5px;top:201.5px;font-size:12px;line-height:16px;letter-spacing:-0.13px;color:#444">BouncingBall</span>
<svg class="b" style="left:534px;top:203px" width="14" height="14"><use href="#i-kan"/></svg>
<span class="t " style="left:551px;top:201.5px;font-size:12px;line-height:16px;letter-spacing:-0.4px;color:#444">2. Start</span>
<svg class="b" style="left:599px;top:203px" width="14" height="14"><use href="#i-kan"/></svg>
<span class="t " style="left:616.5px;top:201.5px;font-size:12px;line-height:16px;letter-spacing:-0.54px;color:#444">14. Kanban</span>
<svg class="b" style="left:685px;top:203px" width="14" height="14"><use href="#i-kan"/></svg>
<span class="t " style="left:702px;top:201.5px;font-size:12px;line-height:16px;letter-spacing:-0.29px;color:#444">Project Management</span>
<svg class="b" style="left:820px;top:203px" width="14" height="14"><use href="#i-kan"/></svg>
<span class="t " style="left:837px;top:201.5px;font-size:12px;line-height:16px;letter-spacing:-0.24px;color:#444">Backlog</span>
<svg class="b" style="left:890px;top:203px" width="14" height="14"><use href="#i-kan"/></svg>
<span class="t " style="left:907px;top:201.5px;font-size:12px;line-height:16px;letter-spacing:-0.3px;color:#444">15. Modelica</span>
<div class="b " style="left:980px;top:199px;width:88px;height:21px;background:#fff;border:1px solid #c9c9c9;border-bottom:none"></div>
<svg class="b" style="left:984px;top:202px" width="16" height="16"><use href="#i-dgm"/></svg>
<span class="t " style="left:1001px;top:201.5px;font-size:12px;line-height:16px;letter-spacing:-0.59px;font-weight:bold;color:#222">*TankPI</span>
<svg class="b" style="left:1053px;top:206px;" width="8" height="8" viewBox="0 0 8 8"><path d="M0.500 0.500l7 7M7.500 0.500l-7 7" stroke="#444" stroke-width="1.100"/></svg>
<svg class="b" style="left:1085px;top:204px;" width="6" height="9" viewBox="0 0 6 9"><path d="M5.500 0.500L0.500 4.500l5 4z" fill="#7a7a7a"/></svg>
<svg class="b" style="left:1103px;top:204px;" width="6" height="9" viewBox="0 0 6 9"><path d="M0.800 0.800L5.200 4.500l-4.400 3.700z" fill="#fff" stroke="#6a6a6a" stroke-width="1"/></svg>
<div class="vp" style="left:278px;top:220px;width:821px;height:803px;background:linear-gradient(180deg,#ffffff 0%,#fcfcfe 25%,#f1f3f9 60%,#e8ecf6 100%)">
<span class="t " style="left:14px;top:16px;font-size:46px;line-height:60px;letter-spacing:-0.01px;color:#000">Water Tank Pressure Regulator</span>
<div class="blk" style="left:84px;top:179px;width:221px;height:325px"></div>
<div class="ln" style="left:84px;top:218px;width:221px;height:1px"></div>
<div class="ln" style="left:84px;top:364px;width:221px;height:1px"></div>
<span class="t " style="left:174.5px;top:184.5px;font-size:11.5px;line-height:15px;letter-spacing:0.05px;color:#111">«block»</span>
<span class="t " style="left:164px;top:198.5px;font-size:11.5px;line-height:15px;letter-spacing:-0.76px;font-weight:bold;color:#111">blocks::Tank</span>
<span class="t " style="left:168.5px;top:222px;font-size:11.5px;line-height:15px;letter-spacing:-0.11px;font-style:italic;color:#111">properties</span>
<span class="t " style="left:90.5px;top:235.8px;font-size:11.5px;line-height:15px;letter-spacing:0.16px;color:#111">area : Real</span>
<span class="t " style="left:90.5px;top:249.45px;font-size:11.5px;line-height:15px;letter-spacing:0.33px;color:#111">flowGain : Real</span>
<span class="t " style="left:90.5px;top:263.1px;font-size:11.5px;line-height:15px;letter-spacing:0.05px;color:#111">h : Real</span>
<span class="t " style="left:90.5px;top:276.75px;font-size:11.5px;line-height:15px;letter-spacing:-0.1px;color:#111">maxV : Real = 10</span>
<span class="t " style="left:90.5px;top:290.4px;font-size:11.5px;line-height:15px;letter-spacing:0.07px;color:#111">minV : Real = 0</span>
<span class="t " style="left:90.5px;top:304.05px;font-size:11.5px;line-height:15px;letter-spacing:0.27px;color:#111">qInPart : LiquidFlow</span>
<span class="t " style="left:90.5px;top:317.7px;font-size:11.5px;line-height:15px;letter-spacing:0.21px;color:#111">qOutPart : LiquidFlow</span>
<span class="t " style="left:90.5px;top:331.35px;font-size:11.5px;line-height:15px;letter-spacing:0.13px;color:#111">tActuatorPart : ActSignal</span>
<span class="t " style="left:90.5px;top:345px;font-size:11.5px;line-height:15px;letter-spacing:0.09px;color:#111">tSensorPart : ReadSignal</span>
<span class="t " style="left:167px;top:368px;font-size:11.5px;line-height:15px;letter-spacing:-0.24px;font-style:italic;color:#111">constraints</span>
<span class="t " style="left:90.5px;top:381.8px;font-size:11.5px;line-height:15px;letter-spacing:0.16px;color:#111">e2 : SensorValue</span>
<span class="t " style="left:90.5px;top:395.45px;font-size:11.5px;line-height:15px;letter-spacing:0.13px;color:#111">e1 : Mass_Balance</span>
<span class="t " style="left:90.5px;top:409.1px;font-size:11.5px;line-height:15px;letter-spacing:-0.04px;color:#111">e3 : Q_OutFlow</span>
<svg class="b" style="left:274px;top:484px;" width="27" height="8" viewBox="0 0 27 8"><g fill="#fff" stroke="#111" stroke-width="1"><ellipse cx="6" cy="4" rx="5.300" ry="3.200"/><ellipse cx="21" cy="4" rx="5.300" ry="3.200"/></g><path d="M11.300 4h4.400" stroke="#111" stroke-width="1"/></svg>
<svg class="b" style="left:78px;top:249px;" width="16" height="16" viewBox="0 0 16 16"><rect x="0.500" y="0.500" width="15" height="15" fill="#d3e5fb" stroke="#1a1a1a" stroke-width="1"/><path d="M6.500 4.500L3.500 8l3 3.500M9.500 4.500L12.500 8l-3 3.500" fill="none" stroke="#111" stroke-width="1.200"/></svg>
<svg class="b" style="left:298px;top:248.5px;" width="16" height="16" viewBox="0 0 16 16"><rect x="0.500" y="0.500" width="15" height="15" fill="#d3e5fb" stroke="#1a1a1a" stroke-width="1"/><path d="M6.500 4.500L3.500 8l3 3.500M9.500 4.500L12.500 8l-3 3.500" fill="none" stroke="#111" stroke-width="1.200"/></svg>
<svg class="b" style="left:78px;top:391px;" width="16" height="16" viewBox="0 0 16 16"><rect x="0.500" y="0.500" width="15" height="15" fill="#d3e5fb" stroke="#1a1a1a" stroke-width="1"/><path d="M6.500 4.500L3.500 8l3 3.500M9.500 4.500L12.500 8l-3 3.500" fill="none" stroke="#111" stroke-width="1.200"/></svg>
<svg class="b" style="left:298px;top:392px;" width="16" height="16" viewBox="0 0 16 16"><rect x="0.500" y="0.500" width="15" height="15" fill="#d3e5fb" stroke="#1a1a1a" stroke-width="1"/><path d="M6.500 4.500L3.500 8l3 3.500M9.500 4.500L12.500 8l-3 3.500" fill="none" stroke="#111" stroke-width="1.200"/></svg>
<span class="t " style="left:45.5px;top:268px;font-size:11.5px;line-height:15px;letter-spacing:-0.02px;font-weight:bold;color:#111">qIn:</span>
<span class="t " style="left:30px;top:281.8px;font-size:11.5px;line-height:15px;letter-spacing:-0.17px;font-weight:bold;color:#111">LiquidFlow</span>
<span class="t " style="left:320.5px;top:267px;font-size:11.5px;line-height:15px;letter-spacing:-0.33px;font-weight:bold;color:#111">qOut:</span>
<span class="t " style="left:308px;top:280.8px;font-size:11.5px;line-height:15px;letter-spacing:-0.17px;font-weight:bold;color:#111">LiquidFlow</span>
<span class="t " style="left:34.5px;top:409px;font-size:11.5px;line-height:15px;letter-spacing:-0.33px;font-weight:bold;color:#111">tSensor:</span>
<span class="t " style="left:28.5px;top:422.8px;font-size:11.5px;line-height:15px;letter-spacing:-0.16px;font-weight:bold;color:#111">ReadSignal</span>
<span class="t " style="left:308px;top:411px;font-size:11.5px;line-height:15px;letter-spacing:-0.29px;font-weight:bold;color:#111">tActuator:</span>
<span class="t " style="left:308.5px;top:424.8px;font-size:11.5px;line-height:15px;letter-spacing:-0.34px;font-weight:bold;color:#111">ActSignal</span>
<div class="blk sq" style="left:388px;top:173px;width:187px;height:103px"></div>
<span class="t " style="left:461.5px;top:178.5px;font-size:11.5px;line-height:15px;letter-spacing:0.05px;color:#111">«block»</span>
<span class="t " style="left:436px;top:192.8px;font-size:11.5px;line-height:15px;letter-spacing:-0.82px;font-weight:bold;color:#111">blocks::LiquidFlow</span>
<div class="blk sq" style="left:389px;top:300px;width:188px;height:104px"></div>
<span class="t " style="left:463px;top:305.5px;font-size:11.5px;line-height:15px;letter-spacing:0.05px;color:#111">«block»</span>
<span class="t " style="left:437px;top:319.8px;font-size:11.5px;line-height:15px;letter-spacing:-0.82px;font-weight:bold;color:#111">blocks::ReadSignal</span>
<div class="blk sq" style="left:391px;top:423px;width:188px;height:103px"></div>
<span class="t " style="left:465px;top:428.5px;font-size:11.5px;line-height:15px;letter-spacing:0.05px;color:#111">«block»</span>
<span class="t " style="left:443.5px;top:442.8px;font-size:11.5px;line-height:15px;letter-spacing:-0.83px;font-weight:bold;color:#111">blocks::ActSignal</span>
<div class="blk" style="left:661px;top:183px;width:202px;height:393px"></div>
<div class="ln" style="left:661px;top:222px;width:202px;height:1px"></div>
<div class="ln" style="left:661px;top:327px;width:202px;height:1px"></div>
<span class="t " style="left:754px;top:188.5px;font-size:11.5px;line-height:15px;letter-spacing:0.05px;color:#111">«block»</span>
<span class="t " style="left:719px;top:202.8px;font-size:11.5px;line-height:15px;letter-spacing:-0.8px;font-weight:bold;color:#111">blocks::BaseController</span>
<span class="t " style="left:748.5px;top:226px;font-size:11.5px;line-height:15px;letter-spacing:-0.11px;font-style:italic;color:#111">properties</span>
<span class="t " style="left:667.3px;top:239.8px;font-size:11.5px;line-height:15px;letter-spacing:0.12px;color:#111">error : Real</span>
<span class="t " style="left:667.3px;top:253.45px;font-size:11.5px;line-height:15px;letter-spacing:-0.24px;color:#111">K : Real</span>
<span class="t " style="left:667.3px;top:267.1px;font-size:11.5px;line-height:15px;letter-spacing:0.03px;color:#111">outCtr : Real</span>
<span class="t " style="left:667.3px;top:280.75px;font-size:11.5px;line-height:15px;letter-spacing:0.13px;color:#111">ref : Real</span>
<span class="t " style="left:667.3px;top:294.4px;font-size:11.5px;line-height:15px;letter-spacing:-0.13px;color:#111">T : Real</span>
<span class="t " style="left:667.3px;top:308.05px;font-size:11.5px;line-height:15px;letter-spacing:0.03px;color:#111">Ts : Real</span>
<span class="t " style="left:746px;top:331px;font-size:11.5px;line-height:15px;letter-spacing:-0.24px;font-style:italic;color:#111">constraints</span>
<span class="t " style="left:667.3px;top:344.8px;font-size:11.5px;line-height:15px;letter-spacing:-0.19px;color:#111">e5 : CoutAct</span>
<span class="t " style="left:667.3px;top:358.45px;font-size:11.5px;line-height:15px;letter-spacing:0.1px;color:#111">e6 : ErrorValue</span>
<svg class="b" style="left:654px;top:286.5px;" width="16" height="16" viewBox="0 0 16 16"><rect x="0.500" y="0.500" width="15" height="15" fill="#d3e5fb" stroke="#1a1a1a" stroke-width="1"/><path d="M6.500 4.500L3.500 8l3 3.500M9.500 4.500L12.500 8l-3 3.500" fill="none" stroke="#111" stroke-width="1.200"/></svg>
<span class="t " style="left:623px;top:305px;font-size:11.5px;line-height:15px;letter-spacing:-0.36px;font-weight:bold;color:#111">cIn:</span>
<span class="t " style="left:605px;top:318.8px;font-size:11.5px;line-height:15px;letter-spacing:-0.16px;font-weight:bold;color:#111">ReadSignal</span>
<div class="blk" style="left:79px;top:533px;width:221px;height:158px"></div>
<div class="ln" style="left:79px;top:572px;width:221px;height:1px"></div>
<span class="t " style="left:169.5px;top:539px;font-size:11.5px;line-height:15px;letter-spacing:0.05px;color:#111">«block»</span>
<span class="t " style="left:140px;top:552.8px;font-size:11.5px;line-height:15px;letter-spacing:-0.93px;font-weight:bold;color:#111">blocks::LiquidSource</span>
<span class="t " style="left:162px;top:576.5px;font-size:11.5px;line-height:15px;letter-spacing:-0.24px;font-style:italic;color:#111">constraints</span>
<span class="t " style="left:85.3px;top:589.8px;font-size:11.5px;line-height:15px;letter-spacing:0.07px;color:#111">e4 : OutFlow</span>
<svg class="b" style="left:267px;top:671.5px;" width="27" height="8" viewBox="0 0 27 8"><g fill="#fff" stroke="#111" stroke-width="1"><ellipse cx="6" cy="4" rx="5.300" ry="3.200"/><ellipse cx="21" cy="4" rx="5.300" ry="3.200"/></g><path d="M11.300 4h4.400" stroke="#111" stroke-width="1"/></svg>
<svg class="b" style="left:293px;top:572.5px;" width="16" height="16" viewBox="0 0 16 16"><rect x="0.500" y="0.500" width="15" height="15" fill="#d3e5fb" stroke="#1a1a1a" stroke-width="1"/><path d="M6.500 4.500L3.500 8l3 3.500M9.500 4.500L12.500 8l-3 3.500" fill="none" stroke="#111" stroke-width="1.200"/></svg>
<span class="t " style="left:315.5px;top:591px;font-size:11.5px;line-height:15px;letter-spacing:-0.33px;font-weight:bold;color:#111">qOut:</span>
<span class="t " style="left:303.5px;top:604.8px;font-size:11.5px;line-height:15px;letter-spacing:-0.17px;font-weight:bold;color:#111">LiquidFlow</span>
<div class="blk" style="left:76px;top:744px;width:221px;height:97px"></div>
<span class="t " style="left:166px;top:749.5px;font-size:11.5px;line-height:15px;letter-spacing:0.05px;color:#111">«block»</span>
<span class="t " style="left:151px;top:763.8px;font-size:11.5px;line-height:15px;letter-spacing:-0.78px;font-weight:bold;color:#111">blocks::TankPI</span>
<div class="blk" style="left:383px;top:557px;width:205px;height:187px"></div>
<div class="ln" style="left:383px;top:595px;width:205px;height:1px"></div>
<div class="ln" style="left:383px;top:660px;width:205px;height:1px"></div>
<span class="t " style="left:454px;top:562.5px;font-size:11.5px;line-height:15px;letter-spacing:0.28px;color:#111">«constraint»</span>
<span class="t " style="left:420px;top:576.8px;font-size:11.5px;line-height:15px;letter-spacing:-0.72px;font-weight:bold;color:#111">constraints::Mass_Balance</span>
<span class="t " style="left:435px;top:600px;font-size:11.5px;line-height:15px;letter-spacing:-0.15px;font-style:italic;color:#111">constraint properties</span>
<span class="t " style="left:389.3px;top:613px;font-size:11.5px;line-height:15px;letter-spacing:0.19px;color:#111">derProperty : Basic_TimeDerivative</span>
<span class="t " style="left:389.3px;top:626.8px;font-size:11.5px;line-height:15px;letter-spacing:0.26px;color:#111">divideProperty : Basic_Division</span>
<span class="t " style="left:389.3px;top:640.6px;font-size:11.5px;line-height:15px;letter-spacing:0.23px;color:#111">minusProperty : Basic_Minus</span>
<span class="t " style="left:458px;top:664px;font-size:11.5px;line-height:15px;letter-spacing:-0.22px;font-style:italic;color:#111">parameters</span>
<span class="t " style="left:389.3px;top:677.8px;font-size:11.5px;line-height:15px;color:#111">a</span>
<span class="t " style="left:389.3px;top:691.45px;font-size:11.5px;line-height:15px;color:#111">h</span>
<span class="t " style="left:389.3px;top:705.1px;font-size:11.5px;line-height:15px;color:#111">x</span>
<span class="t " style="left:389.3px;top:718.75px;font-size:11.5px;line-height:15px;color:#111">y</span>
<svg class="b" style="left:556px;top:724px;" width="27" height="8" viewBox="0 0 27 8"><g fill="#fff" stroke="#111" stroke-width="1"><ellipse cx="6" cy="4" rx="5.300" ry="3.200"/><ellipse cx="21" cy="4" rx="5.300" ry="3.200"/></g><path d="M11.300 4h4.400" stroke="#111" stroke-width="1"/></svg>
<div class="blk" style="left:314px;top:762px;width:292px;height:79px"></div>
<span class="t " style="left:428px;top:768px;font-size:11.5px;line-height:15px;letter-spacing:0.28px;color:#111">«constraint»</span>
<span class="t " style="left:402px;top:781.8px;font-size:11.5px;line-height:15px;letter-spacing:-0.68px;font-weight:bold;color:#111">constraints::Q_OutFlow</span>
<div class="blk" style="left:667px;top:668px;width:196px;height:173px"></div>
<div class="ln" style="left:667px;top:707px;width:196px;height:1px"></div>
<div class="ln" style="left:667px;top:799px;width:196px;height:1px"></div>
<span class="t " style="left:751px;top:674px;font-size:11.5px;line-height:15px;letter-spacing:0.05px;color:#111">«block»</span>
<span class="t " style="left:697.3px;top:687.8px;font-size:11.5px;line-height:15px;letter-spacing:-0.86px;font-weight:bold;color:#111">blocks::PIcontinuousController</span>
<span class="t " style="left:745px;top:711px;font-size:11.5px;line-height:15px;letter-spacing:-0.11px;font-style:italic;color:#111">properties</span>
<span class="t " style="left:673.3px;top:724.8px;font-size:11.5px;line-height:15px;letter-spacing:0.12px;color:#111">error : Real</span>
<span class="t " style="left:673.3px;top:738.45px;font-size:11.5px;line-height:15px;letter-spacing:-0.24px;color:#111">K : Real</span>
<span class="t " style="left:673.3px;top:752.1px;font-size:11.5px;line-height:15px;letter-spacing:0.03px;color:#111">outCtr : Real</span>
<span class="t " style="left:673.3px;top:765.75px;font-size:11.5px;line-height:15px;letter-spacing:-0.13px;color:#111">T : Real</span>
<span class="t " style="left:673.3px;top:779.4px;font-size:11.5px;line-height:15px;letter-spacing:-0.12px;color:#111">x : Real</span>
<div class="ln" style="left:770.5px;top:592px;width:1px;height:76px"></div>
<svg class="b" style="left:763px;top:575px;" width="16" height="18" viewBox="0 0 16 18"><path d="M8 1.200 L14.800 17 H1.200z" fill="#fff6ee" stroke="#111" stroke-width="1"/></svg>
<div class="b " style="left:762px;top:625px;width:20px;height:14px;background:#eceff7"></div>
<span class="t " style="left:722px;top:624.5px;font-size:11.5px;line-height:15px;letter-spacing:0.27px;color:#111">«modelicaExtends»</span>
</div>
<div class="b " style="left:1099px;top:220px;width:17px;height:802px;background:#e1e1e1"></div>
<div class="b " style="left:1099px;top:220px;width:17px;height:16px;background:#fdfdfd;border:1px solid #c4c4c4"></div>
<svg class="b" style="left:1103px;top:225.5px;" width="9" height="5" viewBox="0 0 9 5"><path d="M0 5L4.500 0.300L9 5z" fill="#777"/></svg>
<div class="b " style="left:1099px;top:1006px;width:17px;height:16px;background:#fdfdfd;border:1px solid #c4c4c4"></div>
<svg class="b" style="left:1103px;top:1011.5px;" width="9" height="5" viewBox="0 0 9 5"><path d="M0 0L4.500 4.700L9 0z" fill="#777"/></svg>
<div class="b " style="left:1099px;top:236px;width:17px;height:454px;background:#fdfdfd;border:1px solid #c4c4c4"></div>
<div class="b " style="left:278px;top:1022.5px;width:821px;height:16.5px;background:#e1e1e1"></div>
<div class="b " style="left:278px;top:1022.5px;width:16px;height:16.5px;background:#fdfdfd;border:1px solid #c4c4c4"></div>
<svg class="b" style="left:283.5px;top:1026px;" width="5" height="9" viewBox="0 0 5 9"><path d="M5 0L0.300 4.500L5 9z" fill="#777"/></svg>
<div class="b " style="left:1083px;top:1022.5px;width:16px;height:16.5px;background:#fdfdfd;border:1px solid #c4c4c4"></div>
<svg class="b" style="left:1088.5px;top:1026px;" width="5" height="9" viewBox="0 0 5 9"><path d="M0 0L4.700 4.500L0 9z" fill="#777"/></svg>
<div class="b " style="left:294.5px;top:1022.5px;width:453.5px;height:16.5px;background:#fdfdfd;border:1px solid #c4c4c4"></div>
<div class="b " style="left:1099px;top:1022px;width:17px;height:17px;background:#e6e6e6"></div>
<span class="t " style="left:1127px;top:174px;font-size:20px;line-height:26px;letter-spacing:-0.56px;color:#4a4a4a">Tank</span>
<svg class="b" style="left:1835px;top:184px;" width="10" height="6" viewBox="0 0 10 6"><path d="M0.500 0.500h9l-4.500 4.500z" fill="#555"/></svg>
<svg class="b" style="left:1854px;top:181px;" width="10" height="12" viewBox="0 0 10 12"><path d="M3 1.500h4M3.500 1.500v5M6.500 1.500v5M1.500 6.500h7M5 6.500v4.500" fill="none" stroke="#555" stroke-width="1.100"/></svg>
<svg class="b" style="left:1873px;top:182px;" width="10" height="10" viewBox="0 0 10 10"><path d="M1 1l8 8M9 1l-8 8" stroke="#555" stroke-width="1.300"/></svg>
<svg class="b" style="left:1142px;top:207px;" width="15" height="16" viewBox="0 0 15 16"><rect x="1" y="6" width="13" height="9" fill="#3f9a3a" stroke="#1e5a1c" stroke-width="1"/><rect x="3" y="9" width="9" height="4" fill="#8a8a8a" stroke="#3a3a3a" stroke-width=".6"/><path d="M4 6V2.500M11 6V2.500" stroke="#3a3a3a" stroke-width="1"/><circle cx="4" cy="2.300" r="1.800" fill="#e6d84a" stroke="#6a6a1a" stroke-width=".6"/><circle cx="11" cy="2.300" r="1.800" fill="#e6d84a" stroke="#6a6a1a" stroke-width=".6"/></svg>
<span class="t " style="left:1157.5px;top:209.5px;font-size:11px;line-height:14px;letter-spacing:-0.38px;color:#8a8a8a">par [block] Tank [Tank]</span>
<div class="b " style="left:1888px;top:170px;width:32px;height:869px;background:#e6e6e6"></div>
<svg class="b" style="left:1894px;top:176px;" width="16" height="18" viewBox="0 0 16 18"><g stroke="#3b57c4" stroke-width="1" fill="#fff"><path d="M3 9.500 L10 14.500 L14 9 L7 4z" transform="translate(0 4)"/><path d="M3 9.500 L10 14.500 L14 9 L7 4z" transform="translate(0 2)"/><path d="M2.500 2.500 L8 1.500 L14.500 7 L10 13.500 L3 8.500z" fill="#dfe8fb"/></g><circle cx="5.500" cy="5" r="1.300" fill="#fff" stroke="#3b57c4" stroke-width=".8"/></svg>
<span class="t" style="left:1893px;top:196px;writing-mode:vertical-rl;font-size:13px;line-height:18px;color:#3c3c58;letter-spacing:-0.450px">Tagged Values</span>
<div class="b " style="left:1914px;top:176px;width:5px;height:101px;background:#d8d8d8"></div>
<div class="vp" style="left:1123px;top:228px;width:749px;height:795px;background:linear-gradient(180deg,#ffffff 0%,#fcfcfe 25%,#f1f3f9 60%,#e8ecf6 100%)">
<div class="b" style="left:17px;top:39px;width:900px;height:582px;border:1px solid #000;border-width:1px 0 1px 1px"></div>
<svg class="b" style="left:17px;top:39px;" width="124" height="22" viewBox="0 0 124 22"><path d="M0.500 1 H121.500 V4 L109.500 20.500 H0.500z" fill="#fdfdfe" stroke="#000" stroke-width="1"/></svg>
<span class="t " style="left:22.5px;top:40.7px;font-size:10.5px;line-height:14px;letter-spacing:-0.48px;font-weight:bold;color:#111">par [block] Tank [Tank]</span>
<div class="ln" style="left:25px;top:138px;width:34px;height:1px"></div>
<div class="ln" style="left:25px;top:209px;width:17px;height:1px"></div>
<div class="ln" style="left:41px;top:209px;width:1px;height:117px"></div>
<div class="ln" style="left:289px;top:113px;width:1px;height:29px"></div>
<span class="t " style="left:-4px;top:116.5px;font-size:10.5px;line-height:14px;letter-spacing:-0.37px;font-weight:bold;color:#111">qIn: LiquidFlow</span>
<div class="bb" style="left:58px;top:68px;width:114px;height:128px;"></div>
<span class="t " style="left:70px;top:76.7px;font-size:10.5px;line-height:14px;letter-spacing:-0.42px;font-weight:bold;color:#111">qInPart: LiquidFlow</span>
<div class="bbi" style="left:88px;top:94px;width:70px;height:32px;"></div>
<span class="t " style="left:97.5px;top:101.7px;font-size:10.5px;line-height:14px;letter-spacing:-0.11px;color:#111">lflow : Real</span>
<div class="bb" style="left:263px;top:62px;width:145px;height:52px;"></div>
<span class="t " style="left:313px;top:70.7px;font-size:10.5px;line-height:14px;letter-spacing:-0.52px;font-weight:bold;color:#111">area: Real</span>
<div class="rb" style="left:178px;top:140px;width:199px;height:182px;"></div>
<span class="t " style="left:235px;top:158.7px;font-size:10.5px;line-height:14px;letter-spacing:-0.14px;color:#111">e1 : Mass_Balance</span>
<div class="rb" style="left:534px;top:217px;width:174px;height:122px;"></div>
<span class="t " style="left:583.5px;top:234.7px;font-size:10.5px;line-height:14px;letter-spacing:-0.17px;color:#111">e2 : SensorValue</span>
<span class="t " style="left:610px;top:247.7px;font-size:10.5px;line-height:14px;letter-spacing:-0.17px;color:#111">{a=b}</span>
<div class="rb" style="left:166px;top:336px;width:306px;height:175px;"></div>
<span class="t " style="left:285.5px;top:354.7px;font-size:10.5px;line-height:14px;letter-spacing:-0.25px;color:#111">e3 : Q_OutFlow</span>
<span class="t " style="left:237.5px;top:366.7px;font-size:10.5px;line-height:14px;letter-spacing:0.04px;color:#111">{a=LimitValue2222(min, max, -b*c)}</span>
<div class="bb" style="left:29px;top:325px;width:105px;height:65px;"></div>
<span class="t " style="left:32px;top:332.7px;font-size:10.5px;line-height:14px;letter-spacing:-0.44px;font-weight:bold;color:#111">qOutPart: LiquidFlow</span>
<div class="bbi" style="left:46px;top:348px;width:68px;height:32px;"></div>
<span class="t " style="left:54.5px;top:355.7px;font-size:10.5px;line-height:14px;letter-spacing:-0.11px;color:#111">lflow : Real</span>
<div class="bb" style="left:39px;top:401px;width:83px;height:52px;"></div>
<span class="t " style="left:47.5px;top:409.7px;font-size:10.5px;line-height:14px;letter-spacing:-0.49px;font-weight:bold;color:#111">flowGain: Real</span>
<div class="bb" style="left:412px;top:265px;width:68px;height:53px;"></div>
<span class="t " style="left:430px;top:273.7px;font-size:10.5px;line-height:14px;letter-spacing:-0.57px;font-weight:bold;color:#111">h: Real</span>
<div class="bb" style="left:532px;top:394px;width:68px;height:53px;"></div>
<span class="t " style="left:540px;top:402.7px;font-size:10.5px;line-height:14px;letter-spacing:-0.5px;font-weight:bold;color:#111">maxV: Real</span>
<div class="bb" style="left:535px;top:456px;width:68px;height:53px;"></div>
<span class="t " style="left:544.5px;top:464.7px;font-size:10.5px;line-height:14px;letter-spacing:-0.47px;font-weight:bold;color:#111">minV: Real</span>
<div class="bb" style="left:644px;top:414px;width:134px;height:83px;"></div>
<span class="t " style="left:648.5px;top:421.7px;font-size:10.5px;line-height:14px;letter-spacing:-0.48px;font-weight:bold;color:#111">tSensorPart: ReadSignal</span>
<div class="bbi" style="left:665px;top:445px;width:68px;height:32px;"></div>
<span class="t " style="left:678px;top:452.2px;font-size:10.5px;line-height:14px;letter-spacing:-0.18px;color:#111">val : Real</span>
<div class="bb" style="left:368px;top:535px;width:221px;height:65px;"></div>
<span class="t " style="left:422.5px;top:542.7px;font-size:10.5px;line-height:14px;letter-spacing:-0.4px;font-weight:bold;color:#111">tActuatorPart: ActSignal</span>
<div class="bbi" style="left:407px;top:551px;width:69px;height:32px;"></div>
<span class="t " style="left:420.5px;top:558.7px;font-size:10.5px;line-height:14px;letter-spacing:-0.24px;color:#111">act : Real</span>
<div class="ln" style="left:122px;top:125px;width:1px;height:80px"></div>
<div class="ln" style="left:122px;top:204px;width:57px;height:1px"></div>
<div class="ln" style="left:102px;top:260px;width:77px;height:1px"></div>
<div class="ln" style="left:102px;top:260px;width:1px;height:89px"></div>
<div class="ln" style="left:315px;top:292px;width:1px;height:16px"></div>
<div class="ln" style="left:315px;top:292px;width:98px;height:1px"></div>
<div class="ln" style="left:479px;top:286px;width:56px;height:1px"></div>
<div class="ln" style="left:667px;top:339px;width:1px;height:107px"></div>
<div class="ln" style="left:113px;top:363px;width:54px;height:1px"></div>
<div class="ln" style="left:121px;top:412px;width:46px;height:1px"></div>
<div class="ln" style="left:173px;top:468px;width:1px;height:99px"></div>
<div class="ln" style="left:173px;top:566px;width:235px;height:1px"></div>
<div class="ln" style="left:416px;top:352px;width:1px;height:68px"></div>
<div class="ln" style="left:416px;top:419px;width:117px;height:1px"></div>
<div class="ln" style="left:395px;top:482px;width:1px;height:14px"></div>
<div class="ln" style="left:395px;top:482px;width:141px;height:1px"></div>
<svg class="b" style="left:482px;top:599px;" width="8" height="16" viewBox="0 0 8 16"><path d="M2.500 0L5.500 15" stroke="#000" stroke-width="1"/></svg>
<div class="pt" style="left:281px;top:141px;width:16px;height:16px;"></div>
<span class="t " style="left:299px;top:142.7px;font-size:10.5px;line-height:14px;color:#111">a</span>
<div class="pt" style="left:178px;top:193px;width:17px;height:16px;"></div>
<span class="t " style="left:197.5px;top:195.7px;font-size:10.5px;line-height:14px;color:#111">x</span>
<div class="pt" style="left:178px;top:252px;width:17px;height:16px;"></div>
<span class="t " style="left:197.5px;top:254.7px;font-size:10.5px;line-height:14px;color:#111">y</span>
<div class="pt" style="left:308px;top:307px;width:17px;height:16px;"></div>
<span class="t " style="left:327.5px;top:308.7px;font-size:10.5px;line-height:14px;color:#111">h</span>
<div class="pt" style="left:166px;top:356px;width:16px;height:16px;"></div>
<span class="t " style="left:184.5px;top:357.7px;font-size:10.5px;line-height:14px;color:#111">a</span>
<div class="pt" style="left:166px;top:402px;width:16px;height:16px;"></div>
<span class="t " style="left:184.5px;top:404.2px;font-size:10.5px;line-height:14px;color:#111">b</span>
<div class="pt" style="left:166px;top:453px;width:16px;height:16px;"></div>
<span class="t " style="left:184.5px;top:454.7px;font-size:10.5px;line-height:14px;color:#111">c</span>
<div class="pt" style="left:407px;top:337px;width:16px;height:16px;"></div>
<span class="t " style="left:425.5px;top:338.7px;font-size:10.5px;line-height:14px;letter-spacing:-0.28px;color:#111">max</span>
<div class="pt" style="left:389px;top:495px;width:16px;height:17px;"></div>
<span class="t " style="left:407.5px;top:497.7px;font-size:10.5px;line-height:14px;letter-spacing:0.03px;color:#111">min</span>
<div class="pt" style="left:534px;top:279px;width:16px;height:18px;"></div>
<span class="t " style="left:558.5px;top:280.7px;font-size:10.5px;line-height:14px;color:#111">a</span>
<div class="pt" style="left:657px;top:324px;width:16px;height:16px;"></div>
<span class="t " style="left:679px;top:316.7px;font-size:10.5px;line-height:14px;color:#111">b</span>
<svg class="b" style="left:11px;top:131px;" width="15" height="15" viewBox="0 0 15 15"><rect x="0.500" y="0.500" width="14" height="14" fill="#dbe9fb" stroke="#000" stroke-width="1"/><path d="M6 4L3 7.500l3 3.500M9 4L12 7.500l-3 3.500" fill="none" stroke="#111" stroke-width="1.100"/></svg>
<svg class="b" style="left:11px;top:202px;" width="15" height="15" viewBox="0 0 15 15"><rect x="0.500" y="0.500" width="14" height="14" fill="#dbe9fb" stroke="#000" stroke-width="1"/><path d="M6 4L3 7.500l3 3.500M9 4L12 7.500l-3 3.500" fill="none" stroke="#111" stroke-width="1.100"/></svg>
<svg class="b" style="left:482px;top:613px;" width="14" height="16" viewBox="0 0 14 16"><rect x="0.500" y="0.500" width="13" height="15" fill="#dbe9fb" stroke="#000" stroke-width="1"/><path d="M3.500 6.500L7 3.500l3.500 3M3.500 9.500L7 12.500l3.500-3" fill="none" stroke="#111" stroke-width="1.100"/></svg>
<span class="t " style="left:45px;top:227.7px;font-size:10.5px;line-height:14px;letter-spacing:-0.46px;font-weight:bold;color:#111">qOut: LiquidFlow</span>
<span class="t " style="left:442px;top:629.7px;font-size:10.5px;line-height:14px;letter-spacing:-0.41px;font-weight:bold;color:#111">tActuator: ActSignal</span>
<span class="t " style="left:290.5px;top:127.7px;font-size:10.5px;line-height:14px;letter-spacing:0.09px;color:#111">«equal»</span>
<span class="t " style="left:127.5px;top:203.7px;font-size:10.5px;line-height:14px;letter-spacing:0.09px;color:#111">«equal»</span>
<span class="t " style="left:111.5px;top:289.7px;font-size:10.5px;line-height:14px;letter-spacing:0.09px;color:#111">«equal»</span>
<span class="t " style="left:331.5px;top:295.7px;font-size:10.5px;line-height:14px;letter-spacing:0.09px;color:#111">«equal»</span>
<span class="t " style="left:508.5px;top:286.7px;font-size:10.5px;line-height:14px;letter-spacing:0.09px;color:#111">«equal»</span>
<span class="t " style="left:668.5px;top:392.2px;font-size:10.5px;line-height:14px;letter-spacing:0.09px;color:#111">«equal»</span>
<span class="t " style="left:144.5px;top:366.7px;font-size:10.5px;line-height:14px;letter-spacing:0.09px;color:#111">«equal»</span>
<span class="t " style="left:123.5px;top:437.7px;font-size:10.5px;line-height:14px;letter-spacing:0.09px;color:#111">«equal»</span>
<span class="t " style="left:243.5px;top:543.7px;font-size:10.5px;line-height:14px;letter-spacing:0.09px;color:#111">«equal»</span>
<span class="t " style="left:442.5px;top:403.7px;font-size:10.5px;line-height:14px;letter-spacing:0.09px;color:#111">«equal»</span>
<span class="t " style="left:424.5px;top:486.7px;font-size:10.5px;line-height:14px;letter-spacing:0.09px;color:#111">«equal»</span>
</div>
<div class="b " style="left:1872px;top:228px;width:17px;height:795px;background:#e1e1e1"></div>
<div class="b " style="left:1872px;top:228px;width:17px;height:16px;background:#fdfdfd;border:1px solid #c4c4c4"></div>
<svg class="b" style="left:1876px;top:233.5px;" width="9" height="5" viewBox="0 0 9 5"><path d="M0 5L4.500 0.300L9 5z" fill="#777"/></svg>
<div class="b " style="left:1872px;top:1007px;width:17px;height:16px;background:#fdfdfd;border:1px solid #c4c4c4"></div>
<svg class="b" style="left:1876px;top:1012.5px;" width="9" height="5" viewBox="0 0 9 5"><path d="M0 0L4.500 4.700L9 0z" fill="#777"/></svg>
<div class="b " style="left:1872px;top:244px;width:17px;height:534px;background:#fdfdfd;border:1px solid #c4c4c4"></div>
<div class="b " style="left:1123px;top:1023px;width:749px;height:16px;background:#e1e1e1"></div>
<div class="b " style="left:1123px;top:1023px;width:17px;height:16px;background:#fdfdfd;border:1px solid #c4c4c4"></div>
<svg class="b" style="left:1129px;top:1026.5px;" width="5" height="9" viewBox="0 0 5 9"><path d="M5 0L0.300 4.500L5 9z" fill="#777"/></svg>
<div class="b " style="left:1855px;top:1023px;width:17px;height:16px;background:#fdfdfd;border:1px solid #c4c4c4"></div>
<svg class="b" style="left:1861px;top:1026.5px;" width="5" height="9" viewBox="0 0 5 9"><path d="M0 0L4.700 4.500L0 9z" fill="#777"/></svg>
<div class="b " style="left:1163px;top:1023px;width:564px;height:16px;background:#fdfdfd;border:1px solid #c4c4c4"></div>
<div class="b " style="left:1872px;top:1023px;width:17px;height:16px;background:#e1e1e1"></div>
</div></body></html>
